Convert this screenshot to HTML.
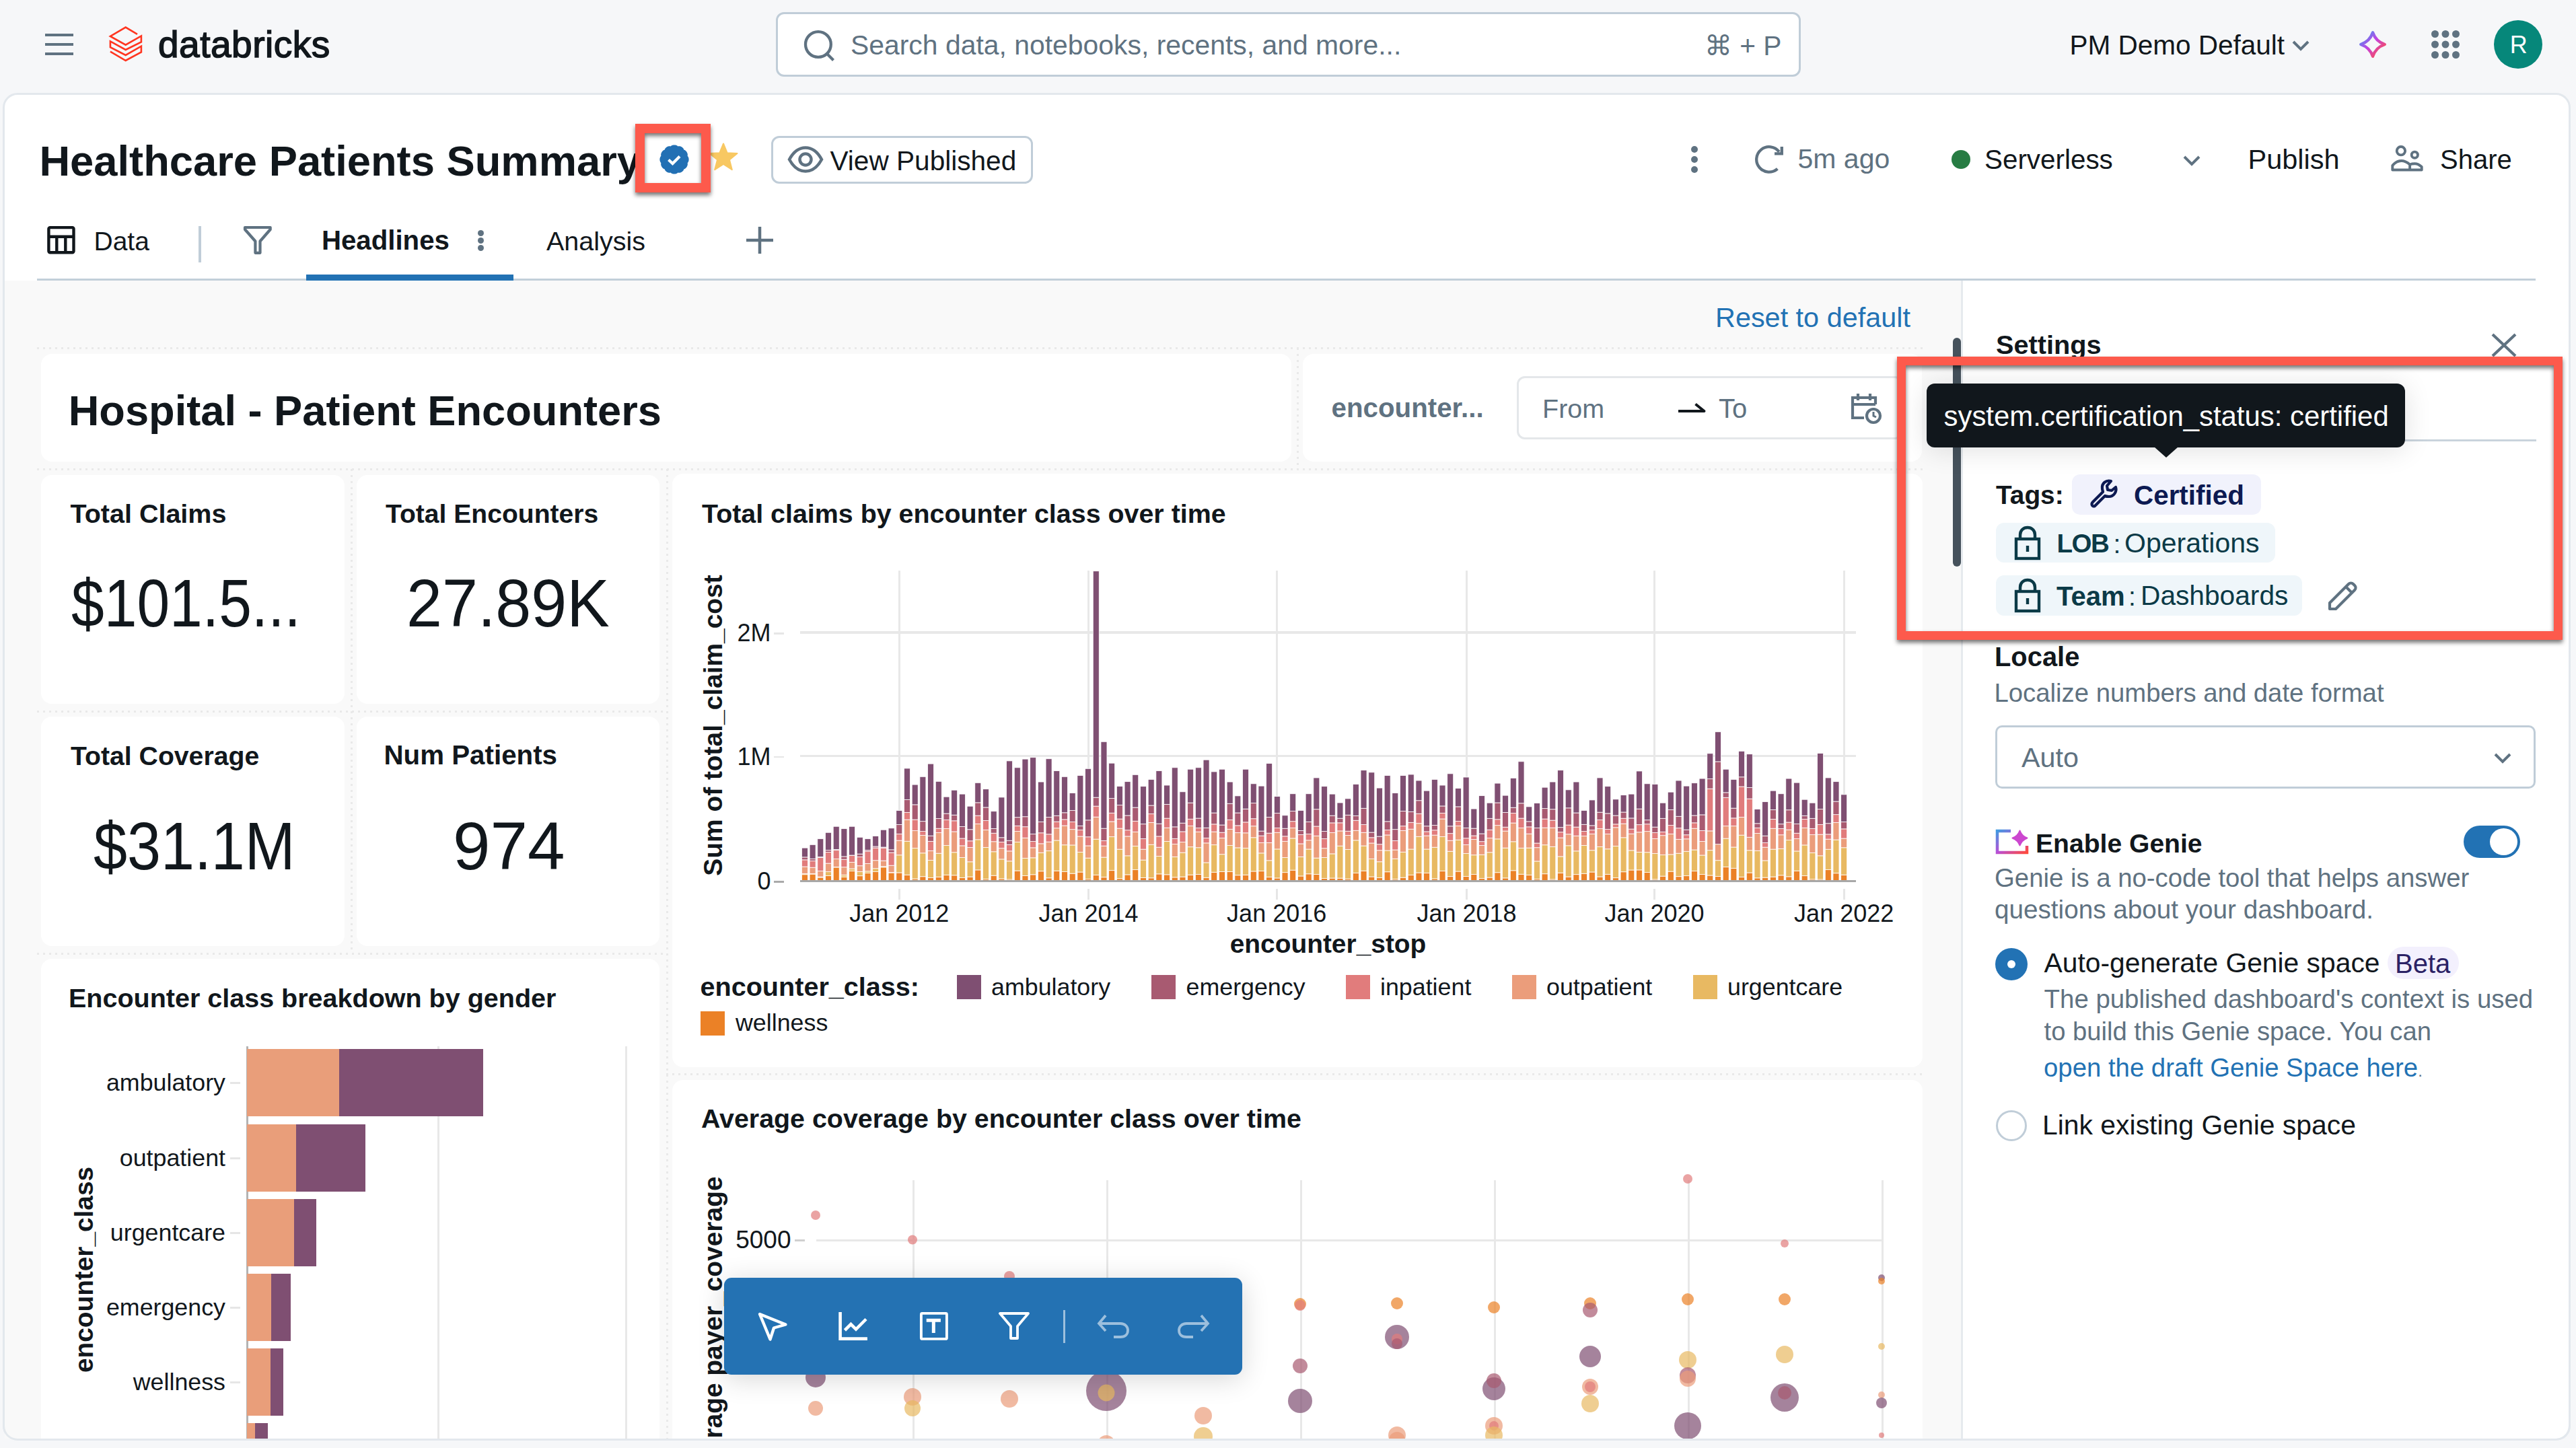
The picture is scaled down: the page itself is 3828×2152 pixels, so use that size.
<!DOCTYPE html><html><head><meta charset="utf-8"><style>
html,body{margin:0;padding:0;width:3828px;height:2152px;overflow:hidden;background:#f6f7f9;font-family:"Liberation Sans",sans-serif;}
.a{position:absolute;}
.t{position:absolute;white-space:nowrap;line-height:1;}
svg.a{overflow:visible;}
</style></head><body>
<div id="root" style="position:absolute;left:0;top:0;width:3828px;height:2152px;overflow:hidden"><div class="a" style="left:67px;top:50px;width:42px;height:4px;background:#5f7281"></div>
<div class="a" style="left:67px;top:64px;width:42px;height:4px;background:#5f7281"></div>
<div class="a" style="left:67px;top:78px;width:42px;height:4px;background:#5f7281"></div>
<svg class="a" style="left:155px;top:30px;" width="70" height="70" viewBox="0 0 70 70"><path d="M49 20.8 L31.7 10.6 L8.9 23.9 L31.7 36.7 L54.9 23.4 L54.9 32.4 L31.7 44 L8.9 31.4 L8.9 40.1 L31.7 52 L54.9 38.7 L54.9 47.4 L31.7 60 L8.9 46.6" fill="none" stroke="#ff3621" stroke-width="2.6" stroke-linejoin="miter"/></svg>
<div class="t " style="left:235.0px;top:39.4px;font-size:55px;color:#11171c;-webkit-text-stroke:1.5px #11171c;letter-spacing:0.5px">databricks</div>
<div class="a" style="left:1153px;top:18px;width:1523px;height:96px;border:3px solid #c0cdd8;border-radius:12px;background:#fff;box-sizing:border-box"></div>
<svg class="a" style="left:1192px;top:43px;" width="50" height="50" viewBox="0 0 50 50"><circle cx="23.9" cy="23" r="18.9" fill="none" stroke="#5f7281" stroke-width="4.3"/><path d="M36.5 36.5 L46.5 46.5" stroke="#5f7281" stroke-width="4.3"/></svg>
<div class="t " style="left:1264.0px;top:47.4px;font-size:40.9px;color:#5f7281;">Search data, notebooks, recents, and more...</div>
<div class="t " style="left:2533.0px;top:47.5px;font-size:40.7px;color:#5f7281;">&#8984; + P</div>
<div class="t " style="left:3075.5px;top:46.7px;font-size:40.5px;color:#11171c;">PM Demo Default</div>
<svg class="a" style="left:3404px;top:56px;" width="30" height="24" viewBox="0 0 30 24"><path d="M4 6 L15 17 L26 6" fill="none" stroke="#5f7281" stroke-width="4"/></svg>
<svg class="a" style="left:3503px;top:43px;" width="46" height="46" viewBox="0 0 46 46"><defs><linearGradient id="sg" x1="0.1" y1="0.1" x2="0.9" y2="0.9"><stop offset="0" stop-color="#4d8ff2"/><stop offset="0.45" stop-color="#c242e2"/><stop offset="1" stop-color="#ff4d4d"/></linearGradient></defs><path d="M23 5.2 Q27.5 18.5 40.8 23 Q27.5 27.5 23 40.8 Q18.5 27.5 5.2 23 Q18.5 18.5 23 5.2 Z" fill="none" stroke="url(#sg)" stroke-width="4.3" stroke-linejoin="round"/></svg>
<svg class="a" style="left:3613px;top:44.6px;" width="43" height="43" viewBox="0 0 43 43"><circle cx="5.5" cy="5.5" r="5.5" fill="#5f7281"/><circle cx="5.5" cy="21.0" r="5.5" fill="#5f7281"/><circle cx="5.5" cy="36.5" r="5.5" fill="#5f7281"/><circle cx="21.0" cy="5.5" r="5.5" fill="#5f7281"/><circle cx="21.0" cy="21.0" r="5.5" fill="#5f7281"/><circle cx="21.0" cy="36.5" r="5.5" fill="#5f7281"/><circle cx="36.5" cy="5.5" r="5.5" fill="#5f7281"/><circle cx="36.5" cy="21.0" r="5.5" fill="#5f7281"/><circle cx="36.5" cy="36.5" r="5.5" fill="#5f7281"/></svg>
<div class="a" style="left:3706px;top:30px;width:72px;height:72px;background:#06877a;border-radius:50%"></div>
<div class="t" style="left:2742.7px;width:2000px;text-align:center;top:49.0px;font-size:36px;color:#fff;">R</div>
<div class="a" style="left:4px;top:138px;width:3816px;height:2003px;background:#fff;border:3px solid #e3e8ed;border-radius:22px;box-sizing:border-box"></div>
<div class="a" style="left:7px;top:417px;width:2908px;height:1721px;background:#f9f9f9"></div>
<div class="a" style="left:2914px;top:417px;width:3px;height:1721px;background:#e6eaee"></div>
<div class="t " style="left:58.4px;top:208.2px;font-size:63.3px;color:#11171c;font-weight:700;">Healthcare Patients Summary</div>
<svg class="a" style="left:980px;top:215px;" width="44" height="44" viewBox="0 0 44 44"><polygon points="43.60,22.00 43.58,22.57 43.53,23.13 43.44,23.69 43.32,24.24 43.15,24.79 42.96,25.32 42.72,25.84 42.44,26.34 42.09,26.82 41.51,27.23 41.81,27.87 41.87,28.46 41.86,29.03 41.81,29.60 41.71,30.17 41.58,30.72 41.41,31.26 41.21,31.79 40.97,32.30 40.71,32.80 40.41,33.28 40.08,33.74 39.72,34.18 39.34,34.60 38.93,34.99 38.49,35.35 38.02,35.68 37.53,35.98 36.99,36.22 36.28,36.28 36.22,36.99 35.98,37.53 35.68,38.02 35.35,38.49 34.99,38.93 34.60,39.34 34.18,39.72 33.74,40.08 33.28,40.41 32.80,40.71 32.30,40.97 31.79,41.21 31.26,41.41 30.72,41.58 30.17,41.71 29.60,41.81 29.03,41.86 28.46,41.87 27.87,41.81 27.23,41.51 26.82,42.09 26.34,42.44 25.84,42.72 25.32,42.96 24.79,43.15 24.24,43.32 23.69,43.44 23.13,43.53 22.57,43.58 22.00,43.60 21.43,43.58 20.87,43.53 20.31,43.44 19.76,43.32 19.21,43.15 18.68,42.96 18.16,42.72 17.66,42.44 17.18,42.09 16.77,41.51 16.13,41.81 15.54,41.87 14.97,41.86 14.40,41.81 13.83,41.71 13.28,41.58 12.74,41.41 12.21,41.21 11.70,40.97 11.20,40.71 10.72,40.41 10.26,40.08 9.82,39.72 9.40,39.34 9.01,38.93 8.65,38.49 8.32,38.02 8.02,37.53 7.78,36.99 7.72,36.28 7.01,36.22 6.47,35.98 5.98,35.68 5.51,35.35 5.07,34.99 4.66,34.60 4.28,34.18 3.92,33.74 3.59,33.28 3.29,32.80 3.03,32.30 2.79,31.79 2.59,31.26 2.42,30.72 2.29,30.17 2.19,29.60 2.14,29.03 2.13,28.46 2.19,27.87 2.49,27.23 1.91,26.82 1.56,26.34 1.28,25.84 1.04,25.32 0.85,24.79 0.68,24.24 0.56,23.69 0.47,23.13 0.42,22.57 0.40,22.00 0.42,21.43 0.47,20.87 0.56,20.31 0.68,19.76 0.85,19.21 1.04,18.68 1.28,18.16 1.56,17.66 1.91,17.18 2.49,16.77 2.19,16.13 2.13,15.54 2.14,14.97 2.19,14.40 2.29,13.83 2.42,13.28 2.59,12.74 2.79,12.21 3.03,11.70 3.29,11.20 3.59,10.72 3.92,10.26 4.28,9.82 4.66,9.40 5.07,9.01 5.51,8.65 5.98,8.32 6.47,8.02 7.01,7.78 7.72,7.72 7.78,7.01 8.02,6.47 8.32,5.98 8.65,5.51 9.01,5.07 9.40,4.66 9.82,4.28 10.26,3.92 10.72,3.59 11.20,3.29 11.70,3.03 12.21,2.79 12.74,2.59 13.28,2.42 13.83,2.29 14.40,2.19 14.97,2.14 15.54,2.13 16.13,2.19 16.77,2.49 17.18,1.91 17.66,1.56 18.16,1.28 18.68,1.04 19.21,0.85 19.76,0.68 20.31,0.56 20.87,0.47 21.43,0.42 22.00,0.40 22.57,0.42 23.13,0.47 23.69,0.56 24.24,0.68 24.79,0.85 25.32,1.04 25.84,1.28 26.34,1.56 26.82,1.91 27.23,2.49 27.87,2.19 28.46,2.13 29.03,2.14 29.60,2.19 30.17,2.29 30.72,2.42 31.26,2.59 31.79,2.79 32.30,3.03 32.80,3.29 33.28,3.59 33.74,3.92 34.18,4.28 34.60,4.66 34.99,5.07 35.35,5.51 35.68,5.98 35.98,6.47 36.22,7.01 36.28,7.72 36.99,7.78 37.53,8.02 38.02,8.32 38.49,8.65 38.93,9.01 39.34,9.40 39.72,9.82 40.08,10.26 40.41,10.72 40.71,11.20 40.97,11.70 41.21,12.21 41.41,12.74 41.58,13.28 41.71,13.83 41.81,14.40 41.86,14.97 41.87,15.54 41.81,16.13 41.51,16.77 42.09,17.18 42.44,17.66 42.72,18.16 42.96,18.68 43.15,19.21 43.32,19.76 43.44,20.31 43.53,20.87 43.58,21.43" fill="#2270b4"/><path d="M13.5 22.5 L19.5 28 L30 17.5" fill="none" stroke="#fff" stroke-width="4.2"/></svg>
<svg class="a" style="left:1052px;top:211px;" width="46" height="46" viewBox="0 0 46 46"><path d="M23 2.5 L28.6 16.2 L43.5 17 L32 26.6 L35.8 41.2 L23 33 L10.2 41.2 L14 26.6 L2.5 17 L17.4 16.2 Z" fill="#f8c862" stroke="#f8c862" stroke-width="2" stroke-linejoin="round"/></svg>
<div class="a" style="left:944px;top:184px;width:112px;height:102px;border:14px solid #fd5a4c;box-sizing:border-box;filter:drop-shadow(0 4px 3px rgba(0,0,0,.55))"></div>
<div class="a" style="left:1146px;top:202px;width:389px;height:71px;border:3px solid #c0cdd8;border-radius:12px;box-sizing:border-box"></div>
<svg class="a" style="left:1170px;top:216px;" width="54" height="42" viewBox="0 0 54 42"><path d="M3 21 C10 8 18 3.5 27 3.5 C36 3.5 44 8 51 21 C44 34 36 38.5 27 38.5 C18 38.5 10 34 3 21 Z" fill="none" stroke="#5f7281" stroke-width="4.5"/><circle cx="27" cy="21" r="8.5" fill="none" stroke="#5f7281" stroke-width="4.5"/></svg>
<div class="t " style="left:1233.5px;top:218.6px;font-size:40.6px;color:#11171c;">View Published</div>
<div class="a" style="left:2513px;top:217px;width:10px;height:10px;background:#5f7281;border-radius:50%"></div>
<div class="a" style="left:2513px;top:232px;width:10px;height:10px;background:#5f7281;border-radius:50%"></div>
<div class="a" style="left:2513px;top:247px;width:10px;height:10px;background:#5f7281;border-radius:50%"></div>
<svg class="a" style="left:2604px;top:212px;" width="50" height="50" viewBox="0 0 50 50"><path d="M39.83 13.65 A18.7 18.7 0 1 0 37.41 38.8" fill="none" stroke="#5f7281" stroke-width="4.3"/><path d="M33 16.3 H43.8 V5.9" fill="none" stroke="#5f7281" stroke-width="4.3" stroke-linejoin="miter"/></svg>
<div class="t " style="left:2671.5px;top:216.3px;font-size:41px;color:#5f7281;">5m ago</div>
<div class="a" style="left:2900px;top:223px;width:28px;height:28px;background:#277c43;border-radius:50%"></div>
<div class="t " style="left:2949.0px;top:216.8px;font-size:40.4px;color:#11171c;">Serverless</div>
<svg class="a" style="left:3242px;top:228px;" width="30" height="22" viewBox="0 0 30 22"><path d="M4 5 L15 16 L26 5" fill="none" stroke="#5f7281" stroke-width="4"/></svg>
<div class="t " style="left:3340.5px;top:215.9px;font-size:41.5px;color:#11171c;">Publish</div>
<svg class="a" style="left:3550px;top:212px;" width="54" height="46" viewBox="0 0 54 46"><circle cx="17.9" cy="12.2" r="6.2" fill="none" stroke="#5f7281" stroke-width="3.9"/><circle cx="38.3" cy="18.2" r="4.6" fill="none" stroke="#5f7281" stroke-width="3.9"/><path d="M5.3 40.5 V34 C9 29.5 13 27 18.6 27 C24 27 27.5 29.5 31.1 32.5 C33.5 31.5 35.5 31.2 38.5 31.2 C42.5 31.2 45.5 33 48.7 36 V40.5 Z M31.1 32.5 V40.5" fill="none" stroke="#5f7281" stroke-width="3.9" stroke-linejoin="round"/></svg>
<div class="t " style="left:3626.0px;top:217.1px;font-size:40px;color:#11171c;">Share</div>
<svg class="a" style="left:68px;top:334px;" width="46" height="46" viewBox="0 0 46 46"><rect x="4.4" y="4.1" width="37.1" height="37.2" rx="2" fill="none" stroke="#11171c" stroke-width="4.4"/><path d="M4.4 17.7 H41.5 M16.3 17.7 V41.3 M29.3 17.7 V41.3" stroke="#11171c" stroke-width="4.4"/></svg>
<div class="t " style="left:139.5px;top:339.0px;font-size:39px;color:#11171c;">Data</div>
<div class="a" style="left:295px;top:336px;width:4px;height:54px;background:#c0cdd8"></div>
<svg class="a" style="left:358px;top:334px;" width="50" height="48" viewBox="0 0 50 48"><path d="M6 4 H43.7 V7 L28.5 24.5 V41.8 H21.4 V24.5 L6 7 Z" fill="none" stroke="#5f7281" stroke-width="4.2" stroke-linejoin="round"/></svg>
<div class="t " style="left:478.0px;top:338.0px;font-size:40.2px;color:#11171c;font-weight:700;">Headlines</div>
<div class="a" style="left:710px;top:341.5px;width:9px;height:9.0px;background:#5f7281;border-radius:50%"></div>
<div class="a" style="left:710px;top:352.5px;width:9px;height:9.0px;background:#5f7281;border-radius:50%"></div>
<div class="a" style="left:710px;top:363.5px;width:9px;height:9.0px;background:#5f7281;border-radius:50%"></div>
<div class="t " style="left:812.0px;top:338.6px;font-size:39.5px;color:#11171c;">Analysis</div>
<svg class="a" style="left:1106px;top:334px;" width="46" height="46" viewBox="0 0 46 46"><path d="M23 3 V43 M3 23 H43" stroke="#5f7281" stroke-width="4.5"/></svg>
<div class="a" style="left:55px;top:414px;width:3713px;height:3px;background:#c2cfd9"></div>
<div class="a" style="left:455px;top:408px;width:308px;height:9px;background:#2272b4"></div>
<div class="t " style="left:2549.0px;top:451.5px;font-size:41.4px;color:#2272b4;">Reset to default</div>
<div class="a" style="left:55px;top:515.5px;width:2805px;height:3.0px;background:repeating-linear-gradient(90deg,#e9e9e9 0 3px,transparent 3px 9px)"></div>
<div class="a" style="left:55px;top:695.5px;width:2805px;height:3.0px;background:repeating-linear-gradient(90deg,#e9e9e9 0 3px,transparent 3px 9px)"></div>
<div class="a" style="left:55px;top:1055.5px;width:936px;height:3.0px;background:repeating-linear-gradient(90deg,#e9e9e9 0 3px,transparent 3px 9px)"></div>
<div class="a" style="left:55px;top:1415.5px;width:936px;height:3.0px;background:repeating-linear-gradient(90deg,#e9e9e9 0 3px,transparent 3px 9px)"></div>
<div class="a" style="left:990px;top:1594.5px;width:1870px;height:3.0px;background:repeating-linear-gradient(90deg,#e9e9e9 0 3px,transparent 3px 9px)"></div>
<div class="a" style="left:521.0px;top:697px;width:3.0px;height:720px;background:repeating-linear-gradient(180deg,#e9e9e9 0 3px,transparent 3px 9px)"></div>
<div class="a" style="left:990.0px;top:697px;width:3.0px;height:1441px;background:repeating-linear-gradient(180deg,#e9e9e9 0 3px,transparent 3px 9px)"></div>
<div class="a" style="left:1926.5px;top:517px;width:3.0px;height:180px;background:repeating-linear-gradient(180deg,#e9e9e9 0 3px,transparent 3px 9px)"></div>
<div class="a" style="left:61px;top:526px;width:1858px;height:160px;background:#fff;border-radius:16px"></div>
<div class="t " style="left:101.7px;top:578.5px;font-size:63.2px;color:#11171c;font-weight:700;">Hospital - Patient Encounters</div>
<div class="a" style="left:1936px;top:526px;width:920px;height:160px;background:#fff;border-radius:16px"></div>
<div class="t " style="left:1978.5px;top:587.2px;font-size:40.3px;color:#5f7281;font-weight:700;">encounter...</div>
<div class="a" style="left:2254px;top:559px;width:574px;height:94px;border:3px solid #e4e7ea;border-radius:12px;box-sizing:border-box;background:#fff"></div>
<div class="t " style="left:2292.0px;top:587.9px;font-size:39.5px;color:#5f7281;">From</div>
<svg class="a" style="left:2492px;top:596px;" width="44" height="20" viewBox="0 0 44 20"><path d="M2 15 H40.5 L27.5 4.5" fill="none" stroke="#11171c" stroke-width="4" stroke-linejoin="round"/></svg>
<div class="t " style="left:2554.0px;top:587.4px;font-size:40px;color:#5f7281;">To</div>
<svg class="a" style="left:2749px;top:581px;" width="50" height="50" viewBox="0 0 50 50"><path d="M21 40 H4 V10 H38 V20 M4 20 H38 M12 4 V14 M30 4 V14" fill="none" stroke="#5f7281" stroke-width="4.2"/><circle cx="35" cy="37" r="10" fill="none" stroke="#5f7281" stroke-width="4.2"/><path d="M35 31 V37 L39 39" fill="none" stroke="#5f7281" stroke-width="3"/></svg>
<div class="a" style="left:61px;top:706px;width:451px;height:340px;background:#fff;border-radius:16px"></div>
<div class="a" style="left:530px;top:706px;width:450px;height:340px;background:#fff;border-radius:16px"></div>
<div class="a" style="left:61px;top:1065px;width:451px;height:341px;background:#fff;border-radius:16px"></div>
<div class="a" style="left:530px;top:1065px;width:450px;height:341px;background:#fff;border-radius:16px"></div>
<div class="t " style="left:104.5px;top:743.6px;font-size:39.5px;color:#11171c;font-weight:700;">Total Claims</div>
<div class="t " style="left:573.0px;top:743.9px;font-size:39.1px;color:#11171c;font-weight:700;">Total Encounters</div>
<div class="t " style="left:105.0px;top:1103.8px;font-size:39.2px;color:#11171c;font-weight:700;">Total Coverage</div>
<div class="t " style="left:570.5px;top:1102.9px;font-size:40.3px;color:#11171c;font-weight:700;">Num Patients</div>
<div class="t" style="left:106.4px;top:846.4px;font-size:100px;color:#11171c;transform:scaleX(0.8757);transform-origin:0 0">$101.5...</div>
<div class="t" style="left:604.3px;top:846.4px;font-size:100px;color:#11171c;transform:scaleX(0.9520);transform-origin:0 0">27.89K</div>
<div class="t" style="left:139.4px;top:1206.9px;font-size:100px;color:#11171c;transform:scaleX(0.8983);transform-origin:0 0">$31.1M</div>
<div class="t" style="left:672.6px;top:1206.9px;font-size:100px;color:#11171c;transform:scaleX(0.9980);transform-origin:0 0">974</div>
<div class="a" style="left:61px;top:1425px;width:919px;height:775px;background:#fff;border-radius:16px"></div>
<div class="t " style="left:102.0px;top:1463.6px;font-size:39.5px;color:#11171c;font-weight:700;">Encounter class breakdown by gender</div>
<div class="a" style="left:650px;top:1555px;width:3px;height:583px;background:#e8e8e8"></div>
<div class="a" style="left:929px;top:1555px;width:3px;height:583px;background:#e8e8e8"></div>
<div class="a" style="left:366px;top:1555px;width:3px;height:583px;background:#b3b3b3"></div>
<div class="a" style="left:367px;top:1559px;width:137px;height:100px;background:#e99e7a"></div>
<div class="a" style="left:504px;top:1559px;width:214px;height:100px;background:#7f4f72"></div>
<div class="t" style="right:3493.0px;top:1591.7px;font-size:35.8px;color:#11171c;">ambulatory</div>
<div class="a" style="left:342px;top:1608px;width:15px;height:3px;background:#e6e6e6"></div>
<div class="a" style="left:367px;top:1671px;width:73px;height:100px;background:#e99e7a"></div>
<div class="a" style="left:440px;top:1671px;width:103px;height:100px;background:#7f4f72"></div>
<div class="t" style="right:3493.0px;top:1703.7px;font-size:35.8px;color:#11171c;">outpatient</div>
<div class="a" style="left:342px;top:1720px;width:15px;height:3px;background:#e6e6e6"></div>
<div class="a" style="left:367px;top:1782px;width:70px;height:100px;background:#e99e7a"></div>
<div class="a" style="left:437px;top:1782px;width:33px;height:100px;background:#7f4f72"></div>
<div class="t" style="right:3493.0px;top:1814.7px;font-size:35.8px;color:#11171c;">urgentcare</div>
<div class="a" style="left:342px;top:1831px;width:15px;height:3px;background:#e6e6e6"></div>
<div class="a" style="left:367px;top:1893px;width:36px;height:100px;background:#e99e7a"></div>
<div class="a" style="left:403px;top:1893px;width:29px;height:100px;background:#7f4f72"></div>
<div class="t" style="right:3493.0px;top:1925.7px;font-size:35.8px;color:#11171c;">emergency</div>
<div class="a" style="left:342px;top:1942px;width:15px;height:3px;background:#e6e6e6"></div>
<div class="a" style="left:367px;top:2004px;width:35px;height:100px;background:#e99e7a"></div>
<div class="a" style="left:402px;top:2004px;width:19px;height:100px;background:#7f4f72"></div>
<div class="t" style="right:3493.0px;top:2036.7px;font-size:35.8px;color:#11171c;">wellness</div>
<div class="a" style="left:342px;top:2053px;width:15px;height:3px;background:#e6e6e6"></div>
<div class="a" style="left:367px;top:2115px;width:12px;height:100px;background:#e99e7a"></div>
<div class="a" style="left:379px;top:2115px;width:19px;height:100px;background:#7f4f72"></div>
<div class="t" style="left:-75px;top:1867px;width:400px;height:40px;text-align:center;font-size:38.8px;font-weight:700;color:#11171c;transform:rotate(-90deg);line-height:40px">encounter_class</div>
<div class="a" style="left:999px;top:704px;width:1858px;height:882px;background:#fff;border-radius:16px"></div>
<div class="t " style="left:1043.0px;top:743.6px;font-size:39.4px;color:#11171c;font-weight:700;">Total claims by encounter class over time</div>
<div class="a" style="left:1335px;top:848px;width:3px;height:461px;background:#e8e8e8"></div>
<div class="a" style="left:1335px;top:1321px;width:3px;height:16px;background:#e6e6e6"></div>
<div class="a" style="left:1616px;top:848px;width:3px;height:461px;background:#e8e8e8"></div>
<div class="a" style="left:1616px;top:1321px;width:3px;height:16px;background:#e6e6e6"></div>
<div class="a" style="left:1896px;top:848px;width:3px;height:461px;background:#e8e8e8"></div>
<div class="a" style="left:1896px;top:1321px;width:3px;height:16px;background:#e6e6e6"></div>
<div class="a" style="left:2178px;top:848px;width:3px;height:461px;background:#e8e8e8"></div>
<div class="a" style="left:2178px;top:1321px;width:3px;height:16px;background:#e6e6e6"></div>
<div class="a" style="left:2457px;top:848px;width:3px;height:461px;background:#e8e8e8"></div>
<div class="a" style="left:2457px;top:1321px;width:3px;height:16px;background:#e6e6e6"></div>
<div class="a" style="left:2739px;top:848px;width:3px;height:461px;background:#e8e8e8"></div>
<div class="a" style="left:2739px;top:1321px;width:3px;height:16px;background:#e6e6e6"></div>
<div class="a" style="left:1189px;top:938px;width:1569px;height:4px;background:#e8e8e8"></div>
<div class="a" style="left:1189px;top:1122px;width:1569px;height:3px;background:#e8e8e8"></div>
<div class="a" style="left:1150px;top:940px;width:15px;height:3px;background:#e6e6e6"></div>
<div class="t" style="right:2682.5px;top:923.0px;font-size:36px;color:#11171c;">2M</div>
<div class="a" style="left:1150px;top:1124px;width:15px;height:2px;background:#e6e6e6"></div>
<div class="t" style="right:2682.5px;top:1106.5px;font-size:36px;color:#11171c;">1M</div>
<div class="a" style="left:1150px;top:1309px;width:15px;height:3px;background:#aaaaaa"></div>
<div class="t" style="right:2682.5px;top:1291.8px;font-size:36px;color:#11171c;">0</div>
<div class="t" style="left:336.3px;width:2000px;text-align:center;top:1340.0px;font-size:36px;color:#11171c;">Jan 2012</div>
<div class="t" style="left:617.5px;width:2000px;text-align:center;top:1340.0px;font-size:36px;color:#11171c;">Jan 2014</div>
<div class="t" style="left:897.2px;width:2000px;text-align:center;top:1340.0px;font-size:36px;color:#11171c;">Jan 2016</div>
<div class="t" style="left:1179.5px;width:2000px;text-align:center;top:1340.0px;font-size:36px;color:#11171c;">Jan 2018</div>
<div class="t" style="left:1458.5px;width:2000px;text-align:center;top:1340.0px;font-size:36px;color:#11171c;">Jan 2020</div>
<div class="t" style="left:1740.2px;width:2000px;text-align:center;top:1340.0px;font-size:36px;color:#11171c;">Jan 2022</div>
<div class="t" style="left:973.5px;width:2000px;text-align:center;top:1384.1px;font-size:38.9px;color:#11171c;font-weight:700;">encounter_stop</div>
<div class="t" style="left:760px;top:1057.5px;width:600px;height:40px;text-align:center;font-size:38.9px;font-weight:700;color:#11171c;transform:rotate(-90deg);line-height:40px">Sum of total_claim_cost</div>
<svg class="a" style="left:0;top:0" width="3828" height="2152"><rect x="1191.40" y="1299.74" width="9" height="9.06" fill="#eb8126" stroke="#fff" stroke-width="0.8"/><rect x="1191.40" y="1298.35" width="9" height="1.39" fill="#e8b962" stroke="#fff" stroke-width="0.8"/><rect x="1191.40" y="1288.01" width="9" height="10.33" fill="#eb9d7b" stroke="#fff" stroke-width="0.8"/><rect x="1191.40" y="1277.86" width="9" height="10.16" fill="#e17c7c" stroke="#fff" stroke-width="0.8"/><rect x="1191.40" y="1273.91" width="9" height="3.95" fill="#a85a71" stroke="#fff" stroke-width="0.8"/><rect x="1191.40" y="1260.12" width="9" height="13.79" fill="#7f4f72" stroke="#fff" stroke-width="0.8"/><rect x="1203.10" y="1299.04" width="9" height="9.76" fill="#eb8126" stroke="#fff" stroke-width="0.8"/><rect x="1203.10" y="1298.51" width="9" height="0.53" fill="#e8b962" stroke="#fff" stroke-width="0.8"/><rect x="1203.10" y="1289.23" width="9" height="9.27" fill="#eb9d7b" stroke="#fff" stroke-width="0.8"/><rect x="1203.10" y="1279.53" width="9" height="9.70" fill="#e17c7c" stroke="#fff" stroke-width="0.8"/><rect x="1203.10" y="1276.33" width="9" height="3.20" fill="#a85a71" stroke="#fff" stroke-width="0.8"/><rect x="1203.10" y="1255.32" width="9" height="21.01" fill="#7f4f72" stroke="#fff" stroke-width="0.8"/><rect x="1214.80" y="1303.95" width="9" height="4.85" fill="#eb8126" stroke="#fff" stroke-width="0.8"/><rect x="1214.80" y="1303.12" width="9" height="0.84" fill="#e8b962" stroke="#fff" stroke-width="0.8"/><rect x="1214.80" y="1294.45" width="9" height="8.66" fill="#eb9d7b" stroke="#fff" stroke-width="0.8"/><rect x="1214.80" y="1274.56" width="9" height="19.89" fill="#e17c7c" stroke="#fff" stroke-width="0.8"/><rect x="1214.80" y="1273.65" width="9" height="0.91" fill="#a85a71" stroke="#fff" stroke-width="0.8"/><rect x="1214.80" y="1246.66" width="9" height="26.99" fill="#7f4f72" stroke="#fff" stroke-width="0.8"/><rect x="1226.50" y="1301.41" width="9" height="7.39" fill="#eb8126" stroke="#fff" stroke-width="0.8"/><rect x="1226.50" y="1295.62" width="9" height="5.78" fill="#e8b962" stroke="#fff" stroke-width="0.8"/><rect x="1226.50" y="1283.10" width="9" height="12.52" fill="#eb9d7b" stroke="#fff" stroke-width="0.8"/><rect x="1226.50" y="1266.43" width="9" height="16.67" fill="#e17c7c" stroke="#fff" stroke-width="0.8"/><rect x="1226.50" y="1263.50" width="9" height="2.93" fill="#a85a71" stroke="#fff" stroke-width="0.8"/><rect x="1226.50" y="1237.25" width="9" height="26.25" fill="#7f4f72" stroke="#fff" stroke-width="0.8"/><rect x="1238.20" y="1288.91" width="9" height="19.89" fill="#eb8126" stroke="#fff" stroke-width="0.8"/><rect x="1238.20" y="1288.48" width="9" height="0.43" fill="#e8b962" stroke="#fff" stroke-width="0.8"/><rect x="1238.20" y="1276.62" width="9" height="11.86" fill="#eb9d7b" stroke="#fff" stroke-width="0.8"/><rect x="1238.20" y="1263.66" width="9" height="12.96" fill="#e17c7c" stroke="#fff" stroke-width="0.8"/><rect x="1238.20" y="1262.59" width="9" height="1.06" fill="#a85a71" stroke="#fff" stroke-width="0.8"/><rect x="1238.20" y="1228.22" width="9" height="34.38" fill="#7f4f72" stroke="#fff" stroke-width="0.8"/><rect x="1249.89" y="1303.16" width="9" height="5.64" fill="#eb8126" stroke="#fff" stroke-width="0.8"/><rect x="1249.89" y="1300.31" width="9" height="2.84" fill="#e8b962" stroke="#fff" stroke-width="0.8"/><rect x="1249.89" y="1288.76" width="9" height="11.55" fill="#eb9d7b" stroke="#fff" stroke-width="0.8"/><rect x="1249.89" y="1277.21" width="9" height="11.55" fill="#e17c7c" stroke="#fff" stroke-width="0.8"/><rect x="1249.89" y="1272.92" width="9" height="4.29" fill="#a85a71" stroke="#fff" stroke-width="0.8"/><rect x="1249.89" y="1231.54" width="9" height="41.38" fill="#7f4f72" stroke="#fff" stroke-width="0.8"/><rect x="1261.59" y="1294.51" width="9" height="14.29" fill="#eb8126" stroke="#fff" stroke-width="0.8"/><rect x="1261.59" y="1291.08" width="9" height="3.43" fill="#e8b962" stroke="#fff" stroke-width="0.8"/><rect x="1261.59" y="1281.50" width="9" height="9.57" fill="#eb9d7b" stroke="#fff" stroke-width="0.8"/><rect x="1261.59" y="1271.47" width="9" height="10.03" fill="#e17c7c" stroke="#fff" stroke-width="0.8"/><rect x="1261.59" y="1271.03" width="9" height="0.44" fill="#a85a71" stroke="#fff" stroke-width="0.8"/><rect x="1261.59" y="1228.22" width="9" height="42.82" fill="#7f4f72" stroke="#fff" stroke-width="0.8"/><rect x="1273.29" y="1301.69" width="9" height="7.11" fill="#eb8126" stroke="#fff" stroke-width="0.8"/><rect x="1273.29" y="1295.42" width="9" height="6.27" fill="#e8b962" stroke="#fff" stroke-width="0.8"/><rect x="1273.29" y="1286.73" width="9" height="8.69" fill="#eb9d7b" stroke="#fff" stroke-width="0.8"/><rect x="1273.29" y="1273.46" width="9" height="13.28" fill="#e17c7c" stroke="#fff" stroke-width="0.8"/><rect x="1273.29" y="1269.14" width="9" height="4.32" fill="#a85a71" stroke="#fff" stroke-width="0.8"/><rect x="1273.29" y="1244.26" width="9" height="24.88" fill="#7f4f72" stroke="#fff" stroke-width="0.8"/><rect x="1284.99" y="1297.59" width="9" height="11.21" fill="#eb8126" stroke="#fff" stroke-width="0.8"/><rect x="1284.99" y="1294.83" width="9" height="2.76" fill="#e8b962" stroke="#fff" stroke-width="0.8"/><rect x="1284.99" y="1283.44" width="9" height="11.39" fill="#eb9d7b" stroke="#fff" stroke-width="0.8"/><rect x="1284.99" y="1265.19" width="9" height="18.24" fill="#e17c7c" stroke="#fff" stroke-width="0.8"/><rect x="1284.99" y="1263.39" width="9" height="1.80" fill="#a85a71" stroke="#fff" stroke-width="0.8"/><rect x="1284.99" y="1246.66" width="9" height="16.74" fill="#7f4f72" stroke="#fff" stroke-width="0.8"/><rect x="1296.69" y="1295.58" width="9" height="13.22" fill="#eb8126" stroke="#fff" stroke-width="0.8"/><rect x="1296.69" y="1290.74" width="9" height="4.84" fill="#e8b962" stroke="#fff" stroke-width="0.8"/><rect x="1296.69" y="1278.75" width="9" height="11.99" fill="#eb9d7b" stroke="#fff" stroke-width="0.8"/><rect x="1296.69" y="1260.11" width="9" height="18.64" fill="#e17c7c" stroke="#fff" stroke-width="0.8"/><rect x="1296.69" y="1257.99" width="9" height="2.12" fill="#a85a71" stroke="#fff" stroke-width="0.8"/><rect x="1296.69" y="1242.42" width="9" height="15.57" fill="#7f4f72" stroke="#fff" stroke-width="0.8"/><rect x="1308.39" y="1288.85" width="9" height="19.95" fill="#eb8126" stroke="#fff" stroke-width="0.8"/><rect x="1308.39" y="1287.76" width="9" height="1.09" fill="#e8b962" stroke="#fff" stroke-width="0.8"/><rect x="1308.39" y="1279.14" width="9" height="8.62" fill="#eb9d7b" stroke="#fff" stroke-width="0.8"/><rect x="1308.39" y="1260.15" width="9" height="18.99" fill="#e17c7c" stroke="#fff" stroke-width="0.8"/><rect x="1308.39" y="1259.03" width="9" height="1.12" fill="#a85a71" stroke="#fff" stroke-width="0.8"/><rect x="1308.39" y="1233.20" width="9" height="25.83" fill="#7f4f72" stroke="#fff" stroke-width="0.8"/><rect x="1320.09" y="1297.00" width="9" height="11.80" fill="#eb8126" stroke="#fff" stroke-width="0.8"/><rect x="1320.09" y="1296.64" width="9" height="0.36" fill="#e8b962" stroke="#fff" stroke-width="0.8"/><rect x="1320.09" y="1286.17" width="9" height="10.46" fill="#eb9d7b" stroke="#fff" stroke-width="0.8"/><rect x="1320.09" y="1267.09" width="9" height="19.09" fill="#e17c7c" stroke="#fff" stroke-width="0.8"/><rect x="1320.09" y="1262.86" width="9" height="4.23" fill="#a85a71" stroke="#fff" stroke-width="0.8"/><rect x="1320.09" y="1230.80" width="9" height="32.06" fill="#7f4f72" stroke="#fff" stroke-width="0.8"/><rect x="1331.79" y="1296.94" width="9" height="11.86" fill="#eb8126" stroke="#fff" stroke-width="0.8"/><rect x="1331.79" y="1270.79" width="9" height="26.15" fill="#e8b962" stroke="#fff" stroke-width="0.8"/><rect x="1331.79" y="1249.08" width="9" height="21.71" fill="#eb9d7b" stroke="#fff" stroke-width="0.8"/><rect x="1331.79" y="1239.35" width="9" height="9.73" fill="#e17c7c" stroke="#fff" stroke-width="0.8"/><rect x="1331.79" y="1225.45" width="9" height="13.90" fill="#a85a71" stroke="#fff" stroke-width="0.8"/><rect x="1331.79" y="1204.61" width="9" height="20.84" fill="#7f4f72" stroke="#fff" stroke-width="0.8"/><rect x="1343.49" y="1300.23" width="9" height="8.57" fill="#eb8126" stroke="#fff" stroke-width="0.8"/><rect x="1343.49" y="1250.22" width="9" height="50.01" fill="#e8b962" stroke="#fff" stroke-width="0.8"/><rect x="1343.49" y="1218.15" width="9" height="32.07" fill="#eb9d7b" stroke="#fff" stroke-width="0.8"/><rect x="1343.49" y="1207.37" width="9" height="10.78" fill="#e17c7c" stroke="#fff" stroke-width="0.8"/><rect x="1343.49" y="1188.37" width="9" height="19.00" fill="#a85a71" stroke="#fff" stroke-width="0.8"/><rect x="1343.49" y="1141.92" width="9" height="46.45" fill="#7f4f72" stroke="#fff" stroke-width="0.8"/><rect x="1355.19" y="1306.06" width="9" height="2.74" fill="#eb8126" stroke="#fff" stroke-width="0.8"/><rect x="1355.19" y="1260.65" width="9" height="45.41" fill="#e8b962" stroke="#fff" stroke-width="0.8"/><rect x="1355.19" y="1234.61" width="9" height="26.03" fill="#eb9d7b" stroke="#fff" stroke-width="0.8"/><rect x="1355.19" y="1218.10" width="9" height="16.52" fill="#e17c7c" stroke="#fff" stroke-width="0.8"/><rect x="1355.19" y="1195.89" width="9" height="22.20" fill="#a85a71" stroke="#fff" stroke-width="0.8"/><rect x="1355.19" y="1166.07" width="9" height="29.82" fill="#7f4f72" stroke="#fff" stroke-width="0.8"/><rect x="1366.88" y="1302.76" width="9" height="6.04" fill="#eb8126" stroke="#fff" stroke-width="0.8"/><rect x="1366.88" y="1267.82" width="9" height="34.93" fill="#e8b962" stroke="#fff" stroke-width="0.8"/><rect x="1366.88" y="1241.35" width="9" height="26.47" fill="#eb9d7b" stroke="#fff" stroke-width="0.8"/><rect x="1366.88" y="1235.57" width="9" height="5.78" fill="#e17c7c" stroke="#fff" stroke-width="0.8"/><rect x="1366.88" y="1220.67" width="9" height="14.90" fill="#a85a71" stroke="#fff" stroke-width="0.8"/><rect x="1366.88" y="1154.27" width="9" height="66.40" fill="#7f4f72" stroke="#fff" stroke-width="0.8"/><rect x="1378.58" y="1304.48" width="9" height="4.32" fill="#eb8126" stroke="#fff" stroke-width="0.8"/><rect x="1378.58" y="1278.46" width="9" height="26.01" fill="#e8b962" stroke="#fff" stroke-width="0.8"/><rect x="1378.58" y="1264.36" width="9" height="14.10" fill="#eb9d7b" stroke="#fff" stroke-width="0.8"/><rect x="1378.58" y="1250.33" width="9" height="14.03" fill="#e17c7c" stroke="#fff" stroke-width="0.8"/><rect x="1378.58" y="1242.17" width="9" height="8.16" fill="#a85a71" stroke="#fff" stroke-width="0.8"/><rect x="1378.58" y="1135.10" width="9" height="107.08" fill="#7f4f72" stroke="#fff" stroke-width="0.8"/><rect x="1390.28" y="1303.30" width="9" height="5.50" fill="#eb8126" stroke="#fff" stroke-width="0.8"/><rect x="1390.28" y="1268.20" width="9" height="35.10" fill="#e8b962" stroke="#fff" stroke-width="0.8"/><rect x="1390.28" y="1237.61" width="9" height="30.58" fill="#eb9d7b" stroke="#fff" stroke-width="0.8"/><rect x="1390.28" y="1231.19" width="9" height="6.42" fill="#e17c7c" stroke="#fff" stroke-width="0.8"/><rect x="1390.28" y="1216.55" width="9" height="14.64" fill="#a85a71" stroke="#fff" stroke-width="0.8"/><rect x="1390.28" y="1161.28" width="9" height="55.27" fill="#7f4f72" stroke="#fff" stroke-width="0.8"/><rect x="1401.98" y="1300.33" width="9" height="8.47" fill="#eb8126" stroke="#fff" stroke-width="0.8"/><rect x="1401.98" y="1256.55" width="9" height="43.78" fill="#e8b962" stroke="#fff" stroke-width="0.8"/><rect x="1401.98" y="1231.43" width="9" height="25.12" fill="#eb9d7b" stroke="#fff" stroke-width="0.8"/><rect x="1401.98" y="1218.59" width="9" height="12.84" fill="#e17c7c" stroke="#fff" stroke-width="0.8"/><rect x="1401.98" y="1209.08" width="9" height="9.51" fill="#a85a71" stroke="#fff" stroke-width="0.8"/><rect x="1401.98" y="1184.15" width="9" height="24.93" fill="#7f4f72" stroke="#fff" stroke-width="0.8"/><rect x="1413.68" y="1300.83" width="9" height="7.97" fill="#eb8126" stroke="#fff" stroke-width="0.8"/><rect x="1413.68" y="1266.79" width="9" height="34.04" fill="#e8b962" stroke="#fff" stroke-width="0.8"/><rect x="1413.68" y="1235.95" width="9" height="30.84" fill="#eb9d7b" stroke="#fff" stroke-width="0.8"/><rect x="1413.68" y="1219.82" width="9" height="16.13" fill="#e17c7c" stroke="#fff" stroke-width="0.8"/><rect x="1413.68" y="1211.23" width="9" height="8.59" fill="#a85a71" stroke="#fff" stroke-width="0.8"/><rect x="1413.68" y="1174.19" width="9" height="37.04" fill="#7f4f72" stroke="#fff" stroke-width="0.8"/><rect x="1425.38" y="1304.36" width="9" height="4.44" fill="#eb8126" stroke="#fff" stroke-width="0.8"/><rect x="1425.38" y="1274.53" width="9" height="29.83" fill="#e8b962" stroke="#fff" stroke-width="0.8"/><rect x="1425.38" y="1256.89" width="9" height="17.64" fill="#eb9d7b" stroke="#fff" stroke-width="0.8"/><rect x="1425.38" y="1245.99" width="9" height="10.90" fill="#e17c7c" stroke="#fff" stroke-width="0.8"/><rect x="1425.38" y="1228.51" width="9" height="17.48" fill="#a85a71" stroke="#fff" stroke-width="0.8"/><rect x="1425.38" y="1180.09" width="9" height="48.42" fill="#7f4f72" stroke="#fff" stroke-width="0.8"/><rect x="1437.08" y="1303.08" width="9" height="5.72" fill="#eb8126" stroke="#fff" stroke-width="0.8"/><rect x="1437.08" y="1280.82" width="9" height="22.26" fill="#e8b962" stroke="#fff" stroke-width="0.8"/><rect x="1437.08" y="1259.41" width="9" height="21.41" fill="#eb9d7b" stroke="#fff" stroke-width="0.8"/><rect x="1437.08" y="1249.79" width="9" height="9.62" fill="#e17c7c" stroke="#fff" stroke-width="0.8"/><rect x="1437.08" y="1232.77" width="9" height="17.02" fill="#a85a71" stroke="#fff" stroke-width="0.8"/><rect x="1437.08" y="1198.16" width="9" height="34.61" fill="#7f4f72" stroke="#fff" stroke-width="0.8"/><rect x="1448.78" y="1292.90" width="9" height="15.90" fill="#eb8126" stroke="#fff" stroke-width="0.8"/><rect x="1448.78" y="1247.85" width="9" height="45.05" fill="#e8b962" stroke="#fff" stroke-width="0.8"/><rect x="1448.78" y="1224.48" width="9" height="23.36" fill="#eb9d7b" stroke="#fff" stroke-width="0.8"/><rect x="1448.78" y="1212.12" width="9" height="12.37" fill="#e17c7c" stroke="#fff" stroke-width="0.8"/><rect x="1448.78" y="1192.87" width="9" height="19.25" fill="#a85a71" stroke="#fff" stroke-width="0.8"/><rect x="1448.78" y="1163.31" width="9" height="29.56" fill="#7f4f72" stroke="#fff" stroke-width="0.8"/><rect x="1460.48" y="1306.41" width="9" height="2.39" fill="#eb8126" stroke="#fff" stroke-width="0.8"/><rect x="1460.48" y="1259.36" width="9" height="47.05" fill="#e8b962" stroke="#fff" stroke-width="0.8"/><rect x="1460.48" y="1233.35" width="9" height="26.00" fill="#eb9d7b" stroke="#fff" stroke-width="0.8"/><rect x="1460.48" y="1219.59" width="9" height="13.77" fill="#e17c7c" stroke="#fff" stroke-width="0.8"/><rect x="1460.48" y="1199.93" width="9" height="19.66" fill="#a85a71" stroke="#fff" stroke-width="0.8"/><rect x="1460.48" y="1172.71" width="9" height="27.22" fill="#7f4f72" stroke="#fff" stroke-width="0.8"/><rect x="1472.18" y="1301.17" width="9" height="7.63" fill="#eb8126" stroke="#fff" stroke-width="0.8"/><rect x="1472.18" y="1265.80" width="9" height="35.37" fill="#e8b962" stroke="#fff" stroke-width="0.8"/><rect x="1472.18" y="1250.79" width="9" height="15.01" fill="#eb9d7b" stroke="#fff" stroke-width="0.8"/><rect x="1472.18" y="1238.24" width="9" height="12.55" fill="#e17c7c" stroke="#fff" stroke-width="0.8"/><rect x="1472.18" y="1231.44" width="9" height="6.79" fill="#a85a71" stroke="#fff" stroke-width="0.8"/><rect x="1472.18" y="1205.72" width="9" height="25.72" fill="#7f4f72" stroke="#fff" stroke-width="0.8"/><rect x="1483.88" y="1305.96" width="9" height="2.84" fill="#eb8126" stroke="#fff" stroke-width="0.8"/><rect x="1483.88" y="1276.91" width="9" height="29.06" fill="#e8b962" stroke="#fff" stroke-width="0.8"/><rect x="1483.88" y="1260.71" width="9" height="16.20" fill="#eb9d7b" stroke="#fff" stroke-width="0.8"/><rect x="1483.88" y="1251.41" width="9" height="9.29" fill="#e17c7c" stroke="#fff" stroke-width="0.8"/><rect x="1483.88" y="1244.81" width="9" height="6.60" fill="#a85a71" stroke="#fff" stroke-width="0.8"/><rect x="1483.88" y="1184.88" width="9" height="59.93" fill="#7f4f72" stroke="#fff" stroke-width="0.8"/><rect x="1495.57" y="1306.95" width="9" height="1.85" fill="#eb8126" stroke="#fff" stroke-width="0.8"/><rect x="1495.57" y="1279.80" width="9" height="27.15" fill="#e8b962" stroke="#fff" stroke-width="0.8"/><rect x="1495.57" y="1264.84" width="9" height="14.97" fill="#eb9d7b" stroke="#fff" stroke-width="0.8"/><rect x="1495.57" y="1255.28" width="9" height="9.55" fill="#e17c7c" stroke="#fff" stroke-width="0.8"/><rect x="1495.57" y="1249.23" width="9" height="6.05" fill="#a85a71" stroke="#fff" stroke-width="0.8"/><rect x="1495.57" y="1130.85" width="9" height="118.38" fill="#7f4f72" stroke="#fff" stroke-width="0.8"/><rect x="1507.27" y="1294.06" width="9" height="14.74" fill="#eb8126" stroke="#fff" stroke-width="0.8"/><rect x="1507.27" y="1251.55" width="9" height="42.51" fill="#e8b962" stroke="#fff" stroke-width="0.8"/><rect x="1507.27" y="1235.63" width="9" height="15.92" fill="#eb9d7b" stroke="#fff" stroke-width="0.8"/><rect x="1507.27" y="1227.30" width="9" height="8.32" fill="#e17c7c" stroke="#fff" stroke-width="0.8"/><rect x="1507.27" y="1214.73" width="9" height="12.58" fill="#a85a71" stroke="#fff" stroke-width="0.8"/><rect x="1507.27" y="1140.81" width="9" height="73.91" fill="#7f4f72" stroke="#fff" stroke-width="0.8"/><rect x="1518.97" y="1301.58" width="9" height="7.22" fill="#eb8126" stroke="#fff" stroke-width="0.8"/><rect x="1518.97" y="1275.38" width="9" height="26.21" fill="#e8b962" stroke="#fff" stroke-width="0.8"/><rect x="1518.97" y="1245.25" width="9" height="30.13" fill="#eb9d7b" stroke="#fff" stroke-width="0.8"/><rect x="1518.97" y="1228.73" width="9" height="16.52" fill="#e17c7c" stroke="#fff" stroke-width="0.8"/><rect x="1518.97" y="1213.75" width="9" height="14.98" fill="#a85a71" stroke="#fff" stroke-width="0.8"/><rect x="1518.97" y="1128.09" width="9" height="85.66" fill="#7f4f72" stroke="#fff" stroke-width="0.8"/><rect x="1530.67" y="1299.82" width="9" height="8.98" fill="#eb8126" stroke="#fff" stroke-width="0.8"/><rect x="1530.67" y="1274.84" width="9" height="24.98" fill="#e8b962" stroke="#fff" stroke-width="0.8"/><rect x="1530.67" y="1259.86" width="9" height="14.98" fill="#eb9d7b" stroke="#fff" stroke-width="0.8"/><rect x="1530.67" y="1250.54" width="9" height="9.32" fill="#e17c7c" stroke="#fff" stroke-width="0.8"/><rect x="1530.67" y="1239.63" width="9" height="10.90" fill="#a85a71" stroke="#fff" stroke-width="0.8"/><rect x="1530.67" y="1125.69" width="9" height="113.94" fill="#7f4f72" stroke="#fff" stroke-width="0.8"/><rect x="1542.37" y="1294.73" width="9" height="14.07" fill="#eb8126" stroke="#fff" stroke-width="0.8"/><rect x="1542.37" y="1267.24" width="9" height="27.49" fill="#e8b962" stroke="#fff" stroke-width="0.8"/><rect x="1542.37" y="1253.87" width="9" height="13.38" fill="#eb9d7b" stroke="#fff" stroke-width="0.8"/><rect x="1542.37" y="1237.81" width="9" height="16.05" fill="#e17c7c" stroke="#fff" stroke-width="0.8"/><rect x="1542.37" y="1221.56" width="9" height="16.25" fill="#a85a71" stroke="#fff" stroke-width="0.8"/><rect x="1542.37" y="1162.02" width="9" height="59.55" fill="#7f4f72" stroke="#fff" stroke-width="0.8"/><rect x="1554.07" y="1304.79" width="9" height="4.01" fill="#eb8126" stroke="#fff" stroke-width="0.8"/><rect x="1554.07" y="1264.64" width="9" height="40.16" fill="#e8b962" stroke="#fff" stroke-width="0.8"/><rect x="1554.07" y="1251.18" width="9" height="13.46" fill="#eb9d7b" stroke="#fff" stroke-width="0.8"/><rect x="1554.07" y="1239.80" width="9" height="11.38" fill="#e17c7c" stroke="#fff" stroke-width="0.8"/><rect x="1554.07" y="1214.42" width="9" height="25.38" fill="#a85a71" stroke="#fff" stroke-width="0.8"/><rect x="1554.07" y="1127.72" width="9" height="86.71" fill="#7f4f72" stroke="#fff" stroke-width="0.8"/><rect x="1565.77" y="1294.22" width="9" height="14.58" fill="#eb8126" stroke="#fff" stroke-width="0.8"/><rect x="1565.77" y="1248.98" width="9" height="45.24" fill="#e8b962" stroke="#fff" stroke-width="0.8"/><rect x="1565.77" y="1230.78" width="9" height="18.20" fill="#eb9d7b" stroke="#fff" stroke-width="0.8"/><rect x="1565.77" y="1221.19" width="9" height="9.59" fill="#e17c7c" stroke="#fff" stroke-width="0.8"/><rect x="1565.77" y="1212.27" width="9" height="8.92" fill="#a85a71" stroke="#fff" stroke-width="0.8"/><rect x="1565.77" y="1145.61" width="9" height="66.66" fill="#7f4f72" stroke="#fff" stroke-width="0.8"/><rect x="1577.47" y="1295.57" width="9" height="13.23" fill="#eb8126" stroke="#fff" stroke-width="0.8"/><rect x="1577.47" y="1255.76" width="9" height="39.81" fill="#e8b962" stroke="#fff" stroke-width="0.8"/><rect x="1577.47" y="1227.05" width="9" height="28.71" fill="#eb9d7b" stroke="#fff" stroke-width="0.8"/><rect x="1577.47" y="1217.87" width="9" height="9.18" fill="#e17c7c" stroke="#fff" stroke-width="0.8"/><rect x="1577.47" y="1207.82" width="9" height="10.06" fill="#a85a71" stroke="#fff" stroke-width="0.8"/><rect x="1577.47" y="1154.27" width="9" height="53.54" fill="#7f4f72" stroke="#fff" stroke-width="0.8"/><rect x="1589.17" y="1298.16" width="9" height="10.64" fill="#eb8126" stroke="#fff" stroke-width="0.8"/><rect x="1589.17" y="1255.94" width="9" height="42.22" fill="#e8b962" stroke="#fff" stroke-width="0.8"/><rect x="1589.17" y="1232.68" width="9" height="23.26" fill="#eb9d7b" stroke="#fff" stroke-width="0.8"/><rect x="1589.17" y="1221.55" width="9" height="11.13" fill="#e17c7c" stroke="#fff" stroke-width="0.8"/><rect x="1589.17" y="1204.50" width="9" height="17.04" fill="#a85a71" stroke="#fff" stroke-width="0.8"/><rect x="1589.17" y="1178.43" width="9" height="26.07" fill="#7f4f72" stroke="#fff" stroke-width="0.8"/><rect x="1600.87" y="1296.04" width="9" height="12.76" fill="#eb8126" stroke="#fff" stroke-width="0.8"/><rect x="1600.87" y="1266.39" width="9" height="29.65" fill="#e8b962" stroke="#fff" stroke-width="0.8"/><rect x="1600.87" y="1242.98" width="9" height="23.41" fill="#eb9d7b" stroke="#fff" stroke-width="0.8"/><rect x="1600.87" y="1233.51" width="9" height="9.47" fill="#e17c7c" stroke="#fff" stroke-width="0.8"/><rect x="1600.87" y="1227.39" width="9" height="6.12" fill="#a85a71" stroke="#fff" stroke-width="0.8"/><rect x="1600.87" y="1152.61" width="9" height="74.78" fill="#7f4f72" stroke="#fff" stroke-width="0.8"/><rect x="1612.56" y="1306.54" width="9" height="2.26" fill="#eb8126" stroke="#fff" stroke-width="0.8"/><rect x="1612.56" y="1275.14" width="9" height="31.40" fill="#e8b962" stroke="#fff" stroke-width="0.8"/><rect x="1612.56" y="1256.98" width="9" height="18.17" fill="#eb9d7b" stroke="#fff" stroke-width="0.8"/><rect x="1612.56" y="1243.78" width="9" height="13.19" fill="#e17c7c" stroke="#fff" stroke-width="0.8"/><rect x="1612.56" y="1218.85" width="9" height="24.93" fill="#a85a71" stroke="#fff" stroke-width="0.8"/><rect x="1612.56" y="1142.29" width="9" height="76.56" fill="#7f4f72" stroke="#fff" stroke-width="0.8"/><rect x="1624.26" y="1300.36" width="9" height="8.44" fill="#eb8126" stroke="#fff" stroke-width="0.8"/><rect x="1624.26" y="1247.13" width="9" height="53.23" fill="#e8b962" stroke="#fff" stroke-width="0.8"/><rect x="1624.26" y="1214.18" width="9" height="32.95" fill="#eb9d7b" stroke="#fff" stroke-width="0.8"/><rect x="1624.26" y="1198.08" width="9" height="16.10" fill="#e17c7c" stroke="#fff" stroke-width="0.8"/><rect x="1624.26" y="1185.15" width="9" height="12.93" fill="#a85a71" stroke="#fff" stroke-width="0.8"/><rect x="1624.26" y="848.72" width="9" height="336.43" fill="#7f4f72" stroke="#fff" stroke-width="0.8"/><rect x="1635.96" y="1303.70" width="9" height="5.10" fill="#eb8126" stroke="#fff" stroke-width="0.8"/><rect x="1635.96" y="1274.05" width="9" height="29.66" fill="#e8b962" stroke="#fff" stroke-width="0.8"/><rect x="1635.96" y="1257.15" width="9" height="16.90" fill="#eb9d7b" stroke="#fff" stroke-width="0.8"/><rect x="1635.96" y="1249.36" width="9" height="7.79" fill="#e17c7c" stroke="#fff" stroke-width="0.8"/><rect x="1635.96" y="1231.16" width="9" height="18.19" fill="#a85a71" stroke="#fff" stroke-width="0.8"/><rect x="1635.96" y="1102.27" width="9" height="128.89" fill="#7f4f72" stroke="#fff" stroke-width="0.8"/><rect x="1647.66" y="1293.67" width="9" height="15.13" fill="#eb8126" stroke="#fff" stroke-width="0.8"/><rect x="1647.66" y="1243.65" width="9" height="50.02" fill="#e8b962" stroke="#fff" stroke-width="0.8"/><rect x="1647.66" y="1221.02" width="9" height="22.63" fill="#eb9d7b" stroke="#fff" stroke-width="0.8"/><rect x="1647.66" y="1208.26" width="9" height="12.76" fill="#e17c7c" stroke="#fff" stroke-width="0.8"/><rect x="1647.66" y="1186.51" width="9" height="21.75" fill="#a85a71" stroke="#fff" stroke-width="0.8"/><rect x="1647.66" y="1134.17" width="9" height="52.34" fill="#7f4f72" stroke="#fff" stroke-width="0.8"/><rect x="1659.36" y="1305.74" width="9" height="3.06" fill="#eb8126" stroke="#fff" stroke-width="0.8"/><rect x="1659.36" y="1262.14" width="9" height="43.59" fill="#e8b962" stroke="#fff" stroke-width="0.8"/><rect x="1659.36" y="1231.11" width="9" height="31.03" fill="#eb9d7b" stroke="#fff" stroke-width="0.8"/><rect x="1659.36" y="1217.07" width="9" height="14.04" fill="#e17c7c" stroke="#fff" stroke-width="0.8"/><rect x="1659.36" y="1196.54" width="9" height="20.53" fill="#a85a71" stroke="#fff" stroke-width="0.8"/><rect x="1659.36" y="1168.47" width="9" height="28.07" fill="#7f4f72" stroke="#fff" stroke-width="0.8"/><rect x="1671.06" y="1299.90" width="9" height="8.90" fill="#eb8126" stroke="#fff" stroke-width="0.8"/><rect x="1671.06" y="1271.85" width="9" height="28.05" fill="#e8b962" stroke="#fff" stroke-width="0.8"/><rect x="1671.06" y="1242.94" width="9" height="28.91" fill="#eb9d7b" stroke="#fff" stroke-width="0.8"/><rect x="1671.06" y="1233.72" width="9" height="9.21" fill="#e17c7c" stroke="#fff" stroke-width="0.8"/><rect x="1671.06" y="1211.95" width="9" height="21.78" fill="#a85a71" stroke="#fff" stroke-width="0.8"/><rect x="1671.06" y="1161.65" width="9" height="50.30" fill="#7f4f72" stroke="#fff" stroke-width="0.8"/><rect x="1682.76" y="1292.62" width="9" height="16.18" fill="#eb8126" stroke="#fff" stroke-width="0.8"/><rect x="1682.76" y="1257.36" width="9" height="35.27" fill="#e8b962" stroke="#fff" stroke-width="0.8"/><rect x="1682.76" y="1236.31" width="9" height="21.05" fill="#eb9d7b" stroke="#fff" stroke-width="0.8"/><rect x="1682.76" y="1220.30" width="9" height="16.01" fill="#e17c7c" stroke="#fff" stroke-width="0.8"/><rect x="1682.76" y="1200.06" width="9" height="20.23" fill="#a85a71" stroke="#fff" stroke-width="0.8"/><rect x="1682.76" y="1151.32" width="9" height="48.74" fill="#7f4f72" stroke="#fff" stroke-width="0.8"/><rect x="1694.46" y="1304.45" width="9" height="4.35" fill="#eb8126" stroke="#fff" stroke-width="0.8"/><rect x="1694.46" y="1278.10" width="9" height="26.34" fill="#e8b962" stroke="#fff" stroke-width="0.8"/><rect x="1694.46" y="1262.13" width="9" height="15.97" fill="#eb9d7b" stroke="#fff" stroke-width="0.8"/><rect x="1694.46" y="1246.59" width="9" height="15.54" fill="#e17c7c" stroke="#fff" stroke-width="0.8"/><rect x="1694.46" y="1224.70" width="9" height="21.89" fill="#a85a71" stroke="#fff" stroke-width="0.8"/><rect x="1694.46" y="1168.66" width="9" height="56.04" fill="#7f4f72" stroke="#fff" stroke-width="0.8"/><rect x="1706.16" y="1304.80" width="9" height="4.00" fill="#eb8126" stroke="#fff" stroke-width="0.8"/><rect x="1706.16" y="1255.24" width="9" height="49.56" fill="#e8b962" stroke="#fff" stroke-width="0.8"/><rect x="1706.16" y="1222.45" width="9" height="32.79" fill="#eb9d7b" stroke="#fff" stroke-width="0.8"/><rect x="1706.16" y="1209.64" width="9" height="12.80" fill="#e17c7c" stroke="#fff" stroke-width="0.8"/><rect x="1706.16" y="1197.00" width="9" height="12.64" fill="#a85a71" stroke="#fff" stroke-width="0.8"/><rect x="1706.16" y="1158.33" width="9" height="38.67" fill="#7f4f72" stroke="#fff" stroke-width="0.8"/><rect x="1717.86" y="1298.86" width="9" height="9.94" fill="#eb8126" stroke="#fff" stroke-width="0.8"/><rect x="1717.86" y="1272.39" width="9" height="26.48" fill="#e8b962" stroke="#fff" stroke-width="0.8"/><rect x="1717.86" y="1259.19" width="9" height="13.20" fill="#eb9d7b" stroke="#fff" stroke-width="0.8"/><rect x="1717.86" y="1242.92" width="9" height="16.27" fill="#e17c7c" stroke="#fff" stroke-width="0.8"/><rect x="1717.86" y="1224.21" width="9" height="18.71" fill="#a85a71" stroke="#fff" stroke-width="0.8"/><rect x="1717.86" y="1145.61" width="9" height="78.60" fill="#7f4f72" stroke="#fff" stroke-width="0.8"/><rect x="1729.55" y="1299.85" width="9" height="8.95" fill="#eb8126" stroke="#fff" stroke-width="0.8"/><rect x="1729.55" y="1250.42" width="9" height="49.43" fill="#e8b962" stroke="#fff" stroke-width="0.8"/><rect x="1729.55" y="1230.22" width="9" height="20.20" fill="#eb9d7b" stroke="#fff" stroke-width="0.8"/><rect x="1729.55" y="1216.10" width="9" height="14.12" fill="#e17c7c" stroke="#fff" stroke-width="0.8"/><rect x="1729.55" y="1195.36" width="9" height="20.74" fill="#a85a71" stroke="#fff" stroke-width="0.8"/><rect x="1729.55" y="1167.00" width="9" height="28.36" fill="#7f4f72" stroke="#fff" stroke-width="0.8"/><rect x="1741.25" y="1303.84" width="9" height="4.96" fill="#eb8126" stroke="#fff" stroke-width="0.8"/><rect x="1741.25" y="1273.36" width="9" height="30.49" fill="#e8b962" stroke="#fff" stroke-width="0.8"/><rect x="1741.25" y="1254.51" width="9" height="18.85" fill="#eb9d7b" stroke="#fff" stroke-width="0.8"/><rect x="1741.25" y="1246.31" width="9" height="8.19" fill="#e17c7c" stroke="#fff" stroke-width="0.8"/><rect x="1741.25" y="1228.88" width="9" height="17.43" fill="#a85a71" stroke="#fff" stroke-width="0.8"/><rect x="1741.25" y="1140.81" width="9" height="88.07" fill="#7f4f72" stroke="#fff" stroke-width="0.8"/><rect x="1752.95" y="1303.13" width="9" height="5.67" fill="#eb8126" stroke="#fff" stroke-width="0.8"/><rect x="1752.95" y="1267.09" width="9" height="36.04" fill="#e8b962" stroke="#fff" stroke-width="0.8"/><rect x="1752.95" y="1251.53" width="9" height="15.57" fill="#eb9d7b" stroke="#fff" stroke-width="0.8"/><rect x="1752.95" y="1235.93" width="9" height="15.60" fill="#e17c7c" stroke="#fff" stroke-width="0.8"/><rect x="1752.95" y="1223.22" width="9" height="12.71" fill="#a85a71" stroke="#fff" stroke-width="0.8"/><rect x="1752.95" y="1176.77" width="9" height="46.45" fill="#7f4f72" stroke="#fff" stroke-width="0.8"/><rect x="1764.65" y="1300.20" width="9" height="8.60" fill="#eb8126" stroke="#fff" stroke-width="0.8"/><rect x="1764.65" y="1258.71" width="9" height="41.49" fill="#e8b962" stroke="#fff" stroke-width="0.8"/><rect x="1764.65" y="1227.46" width="9" height="31.25" fill="#eb9d7b" stroke="#fff" stroke-width="0.8"/><rect x="1764.65" y="1217.27" width="9" height="10.19" fill="#e17c7c" stroke="#fff" stroke-width="0.8"/><rect x="1764.65" y="1193.12" width="9" height="24.15" fill="#a85a71" stroke="#fff" stroke-width="0.8"/><rect x="1764.65" y="1143.21" width="9" height="49.91" fill="#7f4f72" stroke="#fff" stroke-width="0.8"/><rect x="1776.35" y="1299.56" width="9" height="9.24" fill="#eb8126" stroke="#fff" stroke-width="0.8"/><rect x="1776.35" y="1259.78" width="9" height="39.78" fill="#e8b962" stroke="#fff" stroke-width="0.8"/><rect x="1776.35" y="1236.25" width="9" height="23.53" fill="#eb9d7b" stroke="#fff" stroke-width="0.8"/><rect x="1776.35" y="1230.51" width="9" height="5.74" fill="#e17c7c" stroke="#fff" stroke-width="0.8"/><rect x="1776.35" y="1216.05" width="9" height="14.46" fill="#a85a71" stroke="#fff" stroke-width="0.8"/><rect x="1776.35" y="1140.81" width="9" height="75.24" fill="#7f4f72" stroke="#fff" stroke-width="0.8"/><rect x="1788.05" y="1304.25" width="9" height="4.55" fill="#eb8126" stroke="#fff" stroke-width="0.8"/><rect x="1788.05" y="1282.00" width="9" height="22.26" fill="#e8b962" stroke="#fff" stroke-width="0.8"/><rect x="1788.05" y="1252.88" width="9" height="29.12" fill="#eb9d7b" stroke="#fff" stroke-width="0.8"/><rect x="1788.05" y="1245.44" width="9" height="7.44" fill="#e17c7c" stroke="#fff" stroke-width="0.8"/><rect x="1788.05" y="1230.30" width="9" height="15.14" fill="#a85a71" stroke="#fff" stroke-width="0.8"/><rect x="1788.05" y="1129.19" width="9" height="101.11" fill="#7f4f72" stroke="#fff" stroke-width="0.8"/><rect x="1799.75" y="1296.26" width="9" height="12.54" fill="#eb8126" stroke="#fff" stroke-width="0.8"/><rect x="1799.75" y="1255.66" width="9" height="40.60" fill="#e8b962" stroke="#fff" stroke-width="0.8"/><rect x="1799.75" y="1236.14" width="9" height="19.52" fill="#eb9d7b" stroke="#fff" stroke-width="0.8"/><rect x="1799.75" y="1224.87" width="9" height="11.27" fill="#e17c7c" stroke="#fff" stroke-width="0.8"/><rect x="1799.75" y="1208.07" width="9" height="16.80" fill="#a85a71" stroke="#fff" stroke-width="0.8"/><rect x="1799.75" y="1146.90" width="9" height="61.18" fill="#7f4f72" stroke="#fff" stroke-width="0.8"/><rect x="1811.45" y="1295.39" width="9" height="13.41" fill="#eb8126" stroke="#fff" stroke-width="0.8"/><rect x="1811.45" y="1269.74" width="9" height="25.65" fill="#e8b962" stroke="#fff" stroke-width="0.8"/><rect x="1811.45" y="1245.46" width="9" height="24.27" fill="#eb9d7b" stroke="#fff" stroke-width="0.8"/><rect x="1811.45" y="1237.18" width="9" height="8.28" fill="#e17c7c" stroke="#fff" stroke-width="0.8"/><rect x="1811.45" y="1226.03" width="9" height="11.15" fill="#a85a71" stroke="#fff" stroke-width="0.8"/><rect x="1811.45" y="1143.21" width="9" height="82.82" fill="#7f4f72" stroke="#fff" stroke-width="0.8"/><rect x="1823.15" y="1295.56" width="9" height="13.24" fill="#eb8126" stroke="#fff" stroke-width="0.8"/><rect x="1823.15" y="1256.58" width="9" height="38.98" fill="#e8b962" stroke="#fff" stroke-width="0.8"/><rect x="1823.15" y="1232.28" width="9" height="24.30" fill="#eb9d7b" stroke="#fff" stroke-width="0.8"/><rect x="1823.15" y="1218.34" width="9" height="13.94" fill="#e17c7c" stroke="#fff" stroke-width="0.8"/><rect x="1823.15" y="1194.30" width="9" height="24.04" fill="#a85a71" stroke="#fff" stroke-width="0.8"/><rect x="1823.15" y="1162.02" width="9" height="32.28" fill="#7f4f72" stroke="#fff" stroke-width="0.8"/><rect x="1834.85" y="1300.74" width="9" height="8.06" fill="#eb8126" stroke="#fff" stroke-width="0.8"/><rect x="1834.85" y="1259.91" width="9" height="40.83" fill="#e8b962" stroke="#fff" stroke-width="0.8"/><rect x="1834.85" y="1237.64" width="9" height="22.27" fill="#eb9d7b" stroke="#fff" stroke-width="0.8"/><rect x="1834.85" y="1226.87" width="9" height="10.77" fill="#e17c7c" stroke="#fff" stroke-width="0.8"/><rect x="1834.85" y="1208.04" width="9" height="18.83" fill="#a85a71" stroke="#fff" stroke-width="0.8"/><rect x="1834.85" y="1182.85" width="9" height="25.19" fill="#7f4f72" stroke="#fff" stroke-width="0.8"/><rect x="1846.54" y="1300.28" width="9" height="8.52" fill="#eb8126" stroke="#fff" stroke-width="0.8"/><rect x="1846.54" y="1260.45" width="9" height="39.83" fill="#e8b962" stroke="#fff" stroke-width="0.8"/><rect x="1846.54" y="1237.85" width="9" height="22.60" fill="#eb9d7b" stroke="#fff" stroke-width="0.8"/><rect x="1846.54" y="1221.90" width="9" height="15.95" fill="#e17c7c" stroke="#fff" stroke-width="0.8"/><rect x="1846.54" y="1202.19" width="9" height="19.71" fill="#a85a71" stroke="#fff" stroke-width="0.8"/><rect x="1846.54" y="1143.21" width="9" height="58.98" fill="#7f4f72" stroke="#fff" stroke-width="0.8"/><rect x="1858.24" y="1294.93" width="9" height="13.87" fill="#eb8126" stroke="#fff" stroke-width="0.8"/><rect x="1858.24" y="1244.80" width="9" height="50.13" fill="#e8b962" stroke="#fff" stroke-width="0.8"/><rect x="1858.24" y="1227.74" width="9" height="17.06" fill="#eb9d7b" stroke="#fff" stroke-width="0.8"/><rect x="1858.24" y="1216.74" width="9" height="11.00" fill="#e17c7c" stroke="#fff" stroke-width="0.8"/><rect x="1858.24" y="1193.59" width="9" height="23.15" fill="#a85a71" stroke="#fff" stroke-width="0.8"/><rect x="1858.24" y="1164.78" width="9" height="28.80" fill="#7f4f72" stroke="#fff" stroke-width="0.8"/><rect x="1869.94" y="1294.56" width="9" height="14.24" fill="#eb8126" stroke="#fff" stroke-width="0.8"/><rect x="1869.94" y="1267.88" width="9" height="26.68" fill="#e8b962" stroke="#fff" stroke-width="0.8"/><rect x="1869.94" y="1252.51" width="9" height="15.37" fill="#eb9d7b" stroke="#fff" stroke-width="0.8"/><rect x="1869.94" y="1242.09" width="9" height="10.42" fill="#e17c7c" stroke="#fff" stroke-width="0.8"/><rect x="1869.94" y="1235.08" width="9" height="7.00" fill="#a85a71" stroke="#fff" stroke-width="0.8"/><rect x="1869.94" y="1168.10" width="9" height="66.98" fill="#7f4f72" stroke="#fff" stroke-width="0.8"/><rect x="1881.64" y="1303.41" width="9" height="5.39" fill="#eb8126" stroke="#fff" stroke-width="0.8"/><rect x="1881.64" y="1278.85" width="9" height="24.56" fill="#e8b962" stroke="#fff" stroke-width="0.8"/><rect x="1881.64" y="1252.36" width="9" height="26.49" fill="#eb9d7b" stroke="#fff" stroke-width="0.8"/><rect x="1881.64" y="1238.16" width="9" height="14.21" fill="#e17c7c" stroke="#fff" stroke-width="0.8"/><rect x="1881.64" y="1214.43" width="9" height="23.73" fill="#a85a71" stroke="#fff" stroke-width="0.8"/><rect x="1881.64" y="1134.54" width="9" height="79.89" fill="#7f4f72" stroke="#fff" stroke-width="0.8"/><rect x="1893.34" y="1304.94" width="9" height="3.86" fill="#eb8126" stroke="#fff" stroke-width="0.8"/><rect x="1893.34" y="1261.92" width="9" height="43.02" fill="#e8b962" stroke="#fff" stroke-width="0.8"/><rect x="1893.34" y="1237.27" width="9" height="24.65" fill="#eb9d7b" stroke="#fff" stroke-width="0.8"/><rect x="1893.34" y="1230.60" width="9" height="6.67" fill="#e17c7c" stroke="#fff" stroke-width="0.8"/><rect x="1893.34" y="1208.63" width="9" height="21.97" fill="#a85a71" stroke="#fff" stroke-width="0.8"/><rect x="1893.34" y="1183.59" width="9" height="25.04" fill="#7f4f72" stroke="#fff" stroke-width="0.8"/><rect x="1905.04" y="1296.67" width="9" height="12.13" fill="#eb8126" stroke="#fff" stroke-width="0.8"/><rect x="1905.04" y="1274.54" width="9" height="22.14" fill="#e8b962" stroke="#fff" stroke-width="0.8"/><rect x="1905.04" y="1250.28" width="9" height="24.25" fill="#eb9d7b" stroke="#fff" stroke-width="0.8"/><rect x="1905.04" y="1242.80" width="9" height="7.48" fill="#e17c7c" stroke="#fff" stroke-width="0.8"/><rect x="1905.04" y="1231.20" width="9" height="11.60" fill="#a85a71" stroke="#fff" stroke-width="0.8"/><rect x="1905.04" y="1211.81" width="9" height="19.40" fill="#7f4f72" stroke="#fff" stroke-width="0.8"/><rect x="1916.74" y="1293.17" width="9" height="15.63" fill="#eb8126" stroke="#fff" stroke-width="0.8"/><rect x="1916.74" y="1245.90" width="9" height="47.28" fill="#e8b962" stroke="#fff" stroke-width="0.8"/><rect x="1916.74" y="1230.52" width="9" height="15.38" fill="#eb9d7b" stroke="#fff" stroke-width="0.8"/><rect x="1916.74" y="1220.73" width="9" height="9.79" fill="#e17c7c" stroke="#fff" stroke-width="0.8"/><rect x="1916.74" y="1205.54" width="9" height="15.19" fill="#a85a71" stroke="#fff" stroke-width="0.8"/><rect x="1916.74" y="1179.72" width="9" height="25.82" fill="#7f4f72" stroke="#fff" stroke-width="0.8"/><rect x="1928.44" y="1301.95" width="9" height="6.85" fill="#eb8126" stroke="#fff" stroke-width="0.8"/><rect x="1928.44" y="1273.33" width="9" height="28.63" fill="#e8b962" stroke="#fff" stroke-width="0.8"/><rect x="1928.44" y="1253.96" width="9" height="19.37" fill="#eb9d7b" stroke="#fff" stroke-width="0.8"/><rect x="1928.44" y="1240.44" width="9" height="13.52" fill="#e17c7c" stroke="#fff" stroke-width="0.8"/><rect x="1928.44" y="1234.51" width="9" height="5.93" fill="#a85a71" stroke="#fff" stroke-width="0.8"/><rect x="1928.44" y="1204.43" width="9" height="30.08" fill="#7f4f72" stroke="#fff" stroke-width="0.8"/><rect x="1940.14" y="1298.78" width="9" height="10.02" fill="#eb8126" stroke="#fff" stroke-width="0.8"/><rect x="1940.14" y="1262.03" width="9" height="36.75" fill="#e8b962" stroke="#fff" stroke-width="0.8"/><rect x="1940.14" y="1248.76" width="9" height="13.27" fill="#eb9d7b" stroke="#fff" stroke-width="0.8"/><rect x="1940.14" y="1239.56" width="9" height="9.20" fill="#e17c7c" stroke="#fff" stroke-width="0.8"/><rect x="1940.14" y="1221.37" width="9" height="18.19" fill="#a85a71" stroke="#fff" stroke-width="0.8"/><rect x="1940.14" y="1179.72" width="9" height="41.65" fill="#7f4f72" stroke="#fff" stroke-width="0.8"/><rect x="1951.84" y="1299.40" width="9" height="9.40" fill="#eb8126" stroke="#fff" stroke-width="0.8"/><rect x="1951.84" y="1275.14" width="9" height="24.26" fill="#e8b962" stroke="#fff" stroke-width="0.8"/><rect x="1951.84" y="1242.25" width="9" height="32.89" fill="#eb9d7b" stroke="#fff" stroke-width="0.8"/><rect x="1951.84" y="1227.99" width="9" height="14.25" fill="#e17c7c" stroke="#fff" stroke-width="0.8"/><rect x="1951.84" y="1202.75" width="9" height="25.24" fill="#a85a71" stroke="#fff" stroke-width="0.8"/><rect x="1951.84" y="1155.93" width="9" height="46.82" fill="#7f4f72" stroke="#fff" stroke-width="0.8"/><rect x="1963.53" y="1305.41" width="9" height="3.39" fill="#eb8126" stroke="#fff" stroke-width="0.8"/><rect x="1963.53" y="1274.47" width="9" height="30.94" fill="#e8b962" stroke="#fff" stroke-width="0.8"/><rect x="1963.53" y="1260.76" width="9" height="13.71" fill="#eb9d7b" stroke="#fff" stroke-width="0.8"/><rect x="1963.53" y="1246.61" width="9" height="14.15" fill="#e17c7c" stroke="#fff" stroke-width="0.8"/><rect x="1963.53" y="1235.59" width="9" height="11.02" fill="#a85a71" stroke="#fff" stroke-width="0.8"/><rect x="1963.53" y="1168.66" width="9" height="66.93" fill="#7f4f72" stroke="#fff" stroke-width="0.8"/><rect x="1975.23" y="1305.04" width="9" height="3.76" fill="#eb8126" stroke="#fff" stroke-width="0.8"/><rect x="1975.23" y="1268.90" width="9" height="36.14" fill="#e8b962" stroke="#fff" stroke-width="0.8"/><rect x="1975.23" y="1237.51" width="9" height="31.40" fill="#eb9d7b" stroke="#fff" stroke-width="0.8"/><rect x="1975.23" y="1222.91" width="9" height="14.59" fill="#e17c7c" stroke="#fff" stroke-width="0.8"/><rect x="1975.23" y="1212.14" width="9" height="10.78" fill="#a85a71" stroke="#fff" stroke-width="0.8"/><rect x="1975.23" y="1180.09" width="9" height="32.05" fill="#7f4f72" stroke="#fff" stroke-width="0.8"/><rect x="1986.93" y="1305.12" width="9" height="3.68" fill="#eb8126" stroke="#fff" stroke-width="0.8"/><rect x="1986.93" y="1257.21" width="9" height="47.90" fill="#e8b962" stroke="#fff" stroke-width="0.8"/><rect x="1986.93" y="1234.93" width="9" height="22.28" fill="#eb9d7b" stroke="#fff" stroke-width="0.8"/><rect x="1986.93" y="1222.84" width="9" height="12.09" fill="#e17c7c" stroke="#fff" stroke-width="0.8"/><rect x="1986.93" y="1216.16" width="9" height="6.69" fill="#a85a71" stroke="#fff" stroke-width="0.8"/><rect x="1986.93" y="1193.00" width="9" height="23.16" fill="#7f4f72" stroke="#fff" stroke-width="0.8"/><rect x="1998.63" y="1306.18" width="9" height="2.62" fill="#eb8126" stroke="#fff" stroke-width="0.8"/><rect x="1998.63" y="1262.37" width="9" height="43.81" fill="#e8b962" stroke="#fff" stroke-width="0.8"/><rect x="1998.63" y="1241.39" width="9" height="20.98" fill="#eb9d7b" stroke="#fff" stroke-width="0.8"/><rect x="1998.63" y="1235.22" width="9" height="6.17" fill="#e17c7c" stroke="#fff" stroke-width="0.8"/><rect x="1998.63" y="1211.29" width="9" height="23.93" fill="#a85a71" stroke="#fff" stroke-width="0.8"/><rect x="1998.63" y="1186.91" width="9" height="24.38" fill="#7f4f72" stroke="#fff" stroke-width="0.8"/><rect x="2010.33" y="1297.60" width="9" height="11.20" fill="#eb8126" stroke="#fff" stroke-width="0.8"/><rect x="2010.33" y="1248.86" width="9" height="48.74" fill="#e8b962" stroke="#fff" stroke-width="0.8"/><rect x="2010.33" y="1234.25" width="9" height="14.61" fill="#eb9d7b" stroke="#fff" stroke-width="0.8"/><rect x="2010.33" y="1219.25" width="9" height="15.01" fill="#e17c7c" stroke="#fff" stroke-width="0.8"/><rect x="2010.33" y="1212.37" width="9" height="6.88" fill="#a85a71" stroke="#fff" stroke-width="0.8"/><rect x="2010.33" y="1165.34" width="9" height="47.03" fill="#7f4f72" stroke="#fff" stroke-width="0.8"/><rect x="2022.03" y="1294.23" width="9" height="14.57" fill="#eb8126" stroke="#fff" stroke-width="0.8"/><rect x="2022.03" y="1257.04" width="9" height="37.19" fill="#e8b962" stroke="#fff" stroke-width="0.8"/><rect x="2022.03" y="1237.25" width="9" height="19.79" fill="#eb9d7b" stroke="#fff" stroke-width="0.8"/><rect x="2022.03" y="1225.60" width="9" height="11.65" fill="#e17c7c" stroke="#fff" stroke-width="0.8"/><rect x="2022.03" y="1201.27" width="9" height="24.33" fill="#a85a71" stroke="#fff" stroke-width="0.8"/><rect x="2022.03" y="1144.68" width="9" height="56.59" fill="#7f4f72" stroke="#fff" stroke-width="0.8"/><rect x="2033.73" y="1303.00" width="9" height="5.80" fill="#eb8126" stroke="#fff" stroke-width="0.8"/><rect x="2033.73" y="1276.59" width="9" height="26.42" fill="#e8b962" stroke="#fff" stroke-width="0.8"/><rect x="2033.73" y="1252.99" width="9" height="23.60" fill="#eb9d7b" stroke="#fff" stroke-width="0.8"/><rect x="2033.73" y="1244.82" width="9" height="8.17" fill="#e17c7c" stroke="#fff" stroke-width="0.8"/><rect x="2033.73" y="1237.07" width="9" height="7.75" fill="#a85a71" stroke="#fff" stroke-width="0.8"/><rect x="2033.73" y="1147.82" width="9" height="89.25" fill="#7f4f72" stroke="#fff" stroke-width="0.8"/><rect x="2045.43" y="1304.57" width="9" height="4.23" fill="#eb8126" stroke="#fff" stroke-width="0.8"/><rect x="2045.43" y="1280.77" width="9" height="23.80" fill="#e8b962" stroke="#fff" stroke-width="0.8"/><rect x="2045.43" y="1263.77" width="9" height="17.00" fill="#eb9d7b" stroke="#fff" stroke-width="0.8"/><rect x="2045.43" y="1254.79" width="9" height="8.98" fill="#e17c7c" stroke="#fff" stroke-width="0.8"/><rect x="2045.43" y="1243.07" width="9" height="11.72" fill="#a85a71" stroke="#fff" stroke-width="0.8"/><rect x="2045.43" y="1171.05" width="9" height="72.02" fill="#7f4f72" stroke="#fff" stroke-width="0.8"/><rect x="2057.13" y="1295.75" width="9" height="13.05" fill="#eb8126" stroke="#fff" stroke-width="0.8"/><rect x="2057.13" y="1264.00" width="9" height="31.75" fill="#e8b962" stroke="#fff" stroke-width="0.8"/><rect x="2057.13" y="1240.95" width="9" height="23.05" fill="#eb9d7b" stroke="#fff" stroke-width="0.8"/><rect x="2057.13" y="1233.45" width="9" height="7.50" fill="#e17c7c" stroke="#fff" stroke-width="0.8"/><rect x="2057.13" y="1220.88" width="9" height="12.57" fill="#a85a71" stroke="#fff" stroke-width="0.8"/><rect x="2057.13" y="1152.61" width="9" height="68.26" fill="#7f4f72" stroke="#fff" stroke-width="0.8"/><rect x="2068.82" y="1306.69" width="9" height="2.11" fill="#eb8126" stroke="#fff" stroke-width="0.8"/><rect x="2068.82" y="1276.25" width="9" height="30.44" fill="#e8b962" stroke="#fff" stroke-width="0.8"/><rect x="2068.82" y="1263.03" width="9" height="13.22" fill="#eb9d7b" stroke="#fff" stroke-width="0.8"/><rect x="2068.82" y="1249.39" width="9" height="13.64" fill="#e17c7c" stroke="#fff" stroke-width="0.8"/><rect x="2068.82" y="1232.68" width="9" height="16.71" fill="#a85a71" stroke="#fff" stroke-width="0.8"/><rect x="2068.82" y="1178.43" width="9" height="54.25" fill="#7f4f72" stroke="#fff" stroke-width="0.8"/><rect x="2080.52" y="1304.16" width="9" height="4.64" fill="#eb8126" stroke="#fff" stroke-width="0.8"/><rect x="2080.52" y="1266.27" width="9" height="37.89" fill="#e8b962" stroke="#fff" stroke-width="0.8"/><rect x="2080.52" y="1234.41" width="9" height="31.87" fill="#eb9d7b" stroke="#fff" stroke-width="0.8"/><rect x="2080.52" y="1227.70" width="9" height="6.71" fill="#e17c7c" stroke="#fff" stroke-width="0.8"/><rect x="2080.52" y="1205.56" width="9" height="22.14" fill="#a85a71" stroke="#fff" stroke-width="0.8"/><rect x="2080.52" y="1152.61" width="9" height="52.94" fill="#7f4f72" stroke="#fff" stroke-width="0.8"/><rect x="2092.22" y="1300.58" width="9" height="8.22" fill="#eb8126" stroke="#fff" stroke-width="0.8"/><rect x="2092.22" y="1262.02" width="9" height="38.56" fill="#e8b962" stroke="#fff" stroke-width="0.8"/><rect x="2092.22" y="1232.19" width="9" height="29.84" fill="#eb9d7b" stroke="#fff" stroke-width="0.8"/><rect x="2092.22" y="1222.30" width="9" height="9.88" fill="#e17c7c" stroke="#fff" stroke-width="0.8"/><rect x="2092.22" y="1206.49" width="9" height="15.81" fill="#a85a71" stroke="#fff" stroke-width="0.8"/><rect x="2092.22" y="1150.95" width="9" height="55.54" fill="#7f4f72" stroke="#fff" stroke-width="0.8"/><rect x="2103.92" y="1297.02" width="9" height="11.78" fill="#eb8126" stroke="#fff" stroke-width="0.8"/><rect x="2103.92" y="1243.25" width="9" height="53.77" fill="#e8b962" stroke="#fff" stroke-width="0.8"/><rect x="2103.92" y="1223.75" width="9" height="19.51" fill="#eb9d7b" stroke="#fff" stroke-width="0.8"/><rect x="2103.92" y="1209.27" width="9" height="14.48" fill="#e17c7c" stroke="#fff" stroke-width="0.8"/><rect x="2103.92" y="1189.75" width="9" height="19.52" fill="#a85a71" stroke="#fff" stroke-width="0.8"/><rect x="2103.92" y="1159.99" width="9" height="29.76" fill="#7f4f72" stroke="#fff" stroke-width="0.8"/><rect x="2115.62" y="1297.57" width="9" height="11.23" fill="#eb8126" stroke="#fff" stroke-width="0.8"/><rect x="2115.62" y="1262.01" width="9" height="35.56" fill="#e8b962" stroke="#fff" stroke-width="0.8"/><rect x="2115.62" y="1242.06" width="9" height="19.96" fill="#eb9d7b" stroke="#fff" stroke-width="0.8"/><rect x="2115.62" y="1235.92" width="9" height="6.13" fill="#e17c7c" stroke="#fff" stroke-width="0.8"/><rect x="2115.62" y="1227.76" width="9" height="8.17" fill="#a85a71" stroke="#fff" stroke-width="0.8"/><rect x="2115.62" y="1175.11" width="9" height="52.65" fill="#7f4f72" stroke="#fff" stroke-width="0.8"/><rect x="2127.32" y="1305.91" width="9" height="2.89" fill="#eb8126" stroke="#fff" stroke-width="0.8"/><rect x="2127.32" y="1259.19" width="9" height="46.72" fill="#e8b962" stroke="#fff" stroke-width="0.8"/><rect x="2127.32" y="1241.10" width="9" height="18.09" fill="#eb9d7b" stroke="#fff" stroke-width="0.8"/><rect x="2127.32" y="1233.76" width="9" height="7.34" fill="#e17c7c" stroke="#fff" stroke-width="0.8"/><rect x="2127.32" y="1226.52" width="9" height="7.25" fill="#a85a71" stroke="#fff" stroke-width="0.8"/><rect x="2127.32" y="1158.33" width="9" height="68.19" fill="#7f4f72" stroke="#fff" stroke-width="0.8"/><rect x="2139.02" y="1294.55" width="9" height="14.25" fill="#eb8126" stroke="#fff" stroke-width="0.8"/><rect x="2139.02" y="1243.52" width="9" height="51.02" fill="#e8b962" stroke="#fff" stroke-width="0.8"/><rect x="2139.02" y="1217.01" width="9" height="26.51" fill="#eb9d7b" stroke="#fff" stroke-width="0.8"/><rect x="2139.02" y="1208.36" width="9" height="8.65" fill="#e17c7c" stroke="#fff" stroke-width="0.8"/><rect x="2139.02" y="1197.92" width="9" height="10.45" fill="#a85a71" stroke="#fff" stroke-width="0.8"/><rect x="2139.02" y="1167.00" width="9" height="30.92" fill="#7f4f72" stroke="#fff" stroke-width="0.8"/><rect x="2150.72" y="1302.63" width="9" height="6.17" fill="#eb8126" stroke="#fff" stroke-width="0.8"/><rect x="2150.72" y="1265.25" width="9" height="37.38" fill="#e8b962" stroke="#fff" stroke-width="0.8"/><rect x="2150.72" y="1249.15" width="9" height="16.10" fill="#eb9d7b" stroke="#fff" stroke-width="0.8"/><rect x="2150.72" y="1238.69" width="9" height="10.46" fill="#e17c7c" stroke="#fff" stroke-width="0.8"/><rect x="2150.72" y="1227.82" width="9" height="10.87" fill="#a85a71" stroke="#fff" stroke-width="0.8"/><rect x="2150.72" y="1149.85" width="9" height="77.97" fill="#7f4f72" stroke="#fff" stroke-width="0.8"/><rect x="2162.42" y="1295.01" width="9" height="13.79" fill="#eb8126" stroke="#fff" stroke-width="0.8"/><rect x="2162.42" y="1248.22" width="9" height="46.79" fill="#e8b962" stroke="#fff" stroke-width="0.8"/><rect x="2162.42" y="1227.58" width="9" height="20.64" fill="#eb9d7b" stroke="#fff" stroke-width="0.8"/><rect x="2162.42" y="1220.50" width="9" height="7.08" fill="#e17c7c" stroke="#fff" stroke-width="0.8"/><rect x="2162.42" y="1198.90" width="9" height="21.60" fill="#a85a71" stroke="#fff" stroke-width="0.8"/><rect x="2162.42" y="1171.42" width="9" height="27.48" fill="#7f4f72" stroke="#fff" stroke-width="0.8"/><rect x="2174.12" y="1302.39" width="9" height="6.41" fill="#eb8126" stroke="#fff" stroke-width="0.8"/><rect x="2174.12" y="1268.43" width="9" height="33.96" fill="#e8b962" stroke="#fff" stroke-width="0.8"/><rect x="2174.12" y="1255.50" width="9" height="12.93" fill="#eb9d7b" stroke="#fff" stroke-width="0.8"/><rect x="2174.12" y="1245.74" width="9" height="9.75" fill="#e17c7c" stroke="#fff" stroke-width="0.8"/><rect x="2174.12" y="1230.58" width="9" height="15.16" fill="#a85a71" stroke="#fff" stroke-width="0.8"/><rect x="2174.12" y="1155.01" width="9" height="75.57" fill="#7f4f72" stroke="#fff" stroke-width="0.8"/><rect x="2185.82" y="1299.54" width="9" height="9.26" fill="#eb8126" stroke="#fff" stroke-width="0.8"/><rect x="2185.82" y="1270.74" width="9" height="28.80" fill="#e8b962" stroke="#fff" stroke-width="0.8"/><rect x="2185.82" y="1247.59" width="9" height="23.15" fill="#eb9d7b" stroke="#fff" stroke-width="0.8"/><rect x="2185.82" y="1242.01" width="9" height="5.59" fill="#e17c7c" stroke="#fff" stroke-width="0.8"/><rect x="2185.82" y="1231.12" width="9" height="10.89" fill="#a85a71" stroke="#fff" stroke-width="0.8"/><rect x="2185.82" y="1202.03" width="9" height="29.08" fill="#7f4f72" stroke="#fff" stroke-width="0.8"/><rect x="2197.51" y="1305.63" width="9" height="3.17" fill="#eb8126" stroke="#fff" stroke-width="0.8"/><rect x="2197.51" y="1270.24" width="9" height="35.39" fill="#e8b962" stroke="#fff" stroke-width="0.8"/><rect x="2197.51" y="1256.49" width="9" height="13.75" fill="#eb9d7b" stroke="#fff" stroke-width="0.8"/><rect x="2197.51" y="1250.71" width="9" height="5.78" fill="#e17c7c" stroke="#fff" stroke-width="0.8"/><rect x="2197.51" y="1239.01" width="9" height="11.70" fill="#a85a71" stroke="#fff" stroke-width="0.8"/><rect x="2197.51" y="1182.49" width="9" height="56.52" fill="#7f4f72" stroke="#fff" stroke-width="0.8"/><rect x="2209.21" y="1304.07" width="9" height="4.73" fill="#eb8126" stroke="#fff" stroke-width="0.8"/><rect x="2209.21" y="1266.81" width="9" height="37.26" fill="#e8b962" stroke="#fff" stroke-width="0.8"/><rect x="2209.21" y="1245.62" width="9" height="21.19" fill="#eb9d7b" stroke="#fff" stroke-width="0.8"/><rect x="2209.21" y="1233.22" width="9" height="12.40" fill="#e17c7c" stroke="#fff" stroke-width="0.8"/><rect x="2209.21" y="1216.30" width="9" height="16.91" fill="#a85a71" stroke="#fff" stroke-width="0.8"/><rect x="2209.21" y="1193.18" width="9" height="23.12" fill="#7f4f72" stroke="#fff" stroke-width="0.8"/><rect x="2220.91" y="1296.74" width="9" height="12.06" fill="#eb8126" stroke="#fff" stroke-width="0.8"/><rect x="2220.91" y="1246.89" width="9" height="49.86" fill="#e8b962" stroke="#fff" stroke-width="0.8"/><rect x="2220.91" y="1226.66" width="9" height="20.22" fill="#eb9d7b" stroke="#fff" stroke-width="0.8"/><rect x="2220.91" y="1217.78" width="9" height="8.88" fill="#e17c7c" stroke="#fff" stroke-width="0.8"/><rect x="2220.91" y="1193.00" width="9" height="24.79" fill="#a85a71" stroke="#fff" stroke-width="0.8"/><rect x="2220.91" y="1164.05" width="9" height="28.95" fill="#7f4f72" stroke="#fff" stroke-width="0.8"/><rect x="2232.61" y="1304.88" width="9" height="3.92" fill="#eb8126" stroke="#fff" stroke-width="0.8"/><rect x="2232.61" y="1260.18" width="9" height="44.70" fill="#e8b962" stroke="#fff" stroke-width="0.8"/><rect x="2232.61" y="1235.04" width="9" height="25.13" fill="#eb9d7b" stroke="#fff" stroke-width="0.8"/><rect x="2232.61" y="1229.22" width="9" height="5.83" fill="#e17c7c" stroke="#fff" stroke-width="0.8"/><rect x="2232.61" y="1207.45" width="9" height="21.76" fill="#a85a71" stroke="#fff" stroke-width="0.8"/><rect x="2232.61" y="1182.12" width="9" height="25.34" fill="#7f4f72" stroke="#fff" stroke-width="0.8"/><rect x="2244.31" y="1293.80" width="9" height="15.00" fill="#eb8126" stroke="#fff" stroke-width="0.8"/><rect x="2244.31" y="1250.85" width="9" height="42.95" fill="#e8b962" stroke="#fff" stroke-width="0.8"/><rect x="2244.31" y="1223.05" width="9" height="27.79" fill="#eb9d7b" stroke="#fff" stroke-width="0.8"/><rect x="2244.31" y="1208.54" width="9" height="14.52" fill="#e17c7c" stroke="#fff" stroke-width="0.8"/><rect x="2244.31" y="1200.18" width="9" height="8.36" fill="#a85a71" stroke="#fff" stroke-width="0.8"/><rect x="2244.31" y="1156.30" width="9" height="43.88" fill="#7f4f72" stroke="#fff" stroke-width="0.8"/><rect x="2256.01" y="1299.23" width="9" height="9.57" fill="#eb8126" stroke="#fff" stroke-width="0.8"/><rect x="2256.01" y="1260.36" width="9" height="38.87" fill="#e8b962" stroke="#fff" stroke-width="0.8"/><rect x="2256.01" y="1230.52" width="9" height="29.84" fill="#eb9d7b" stroke="#fff" stroke-width="0.8"/><rect x="2256.01" y="1216.08" width="9" height="14.43" fill="#e17c7c" stroke="#fff" stroke-width="0.8"/><rect x="2256.01" y="1193.79" width="9" height="22.29" fill="#a85a71" stroke="#fff" stroke-width="0.8"/><rect x="2256.01" y="1131.78" width="9" height="62.01" fill="#7f4f72" stroke="#fff" stroke-width="0.8"/><rect x="2267.71" y="1300.62" width="9" height="8.18" fill="#eb8126" stroke="#fff" stroke-width="0.8"/><rect x="2267.71" y="1260.12" width="9" height="40.50" fill="#e8b962" stroke="#fff" stroke-width="0.8"/><rect x="2267.71" y="1239.18" width="9" height="20.94" fill="#eb9d7b" stroke="#fff" stroke-width="0.8"/><rect x="2267.71" y="1228.86" width="9" height="10.33" fill="#e17c7c" stroke="#fff" stroke-width="0.8"/><rect x="2267.71" y="1220.88" width="9" height="7.98" fill="#a85a71" stroke="#fff" stroke-width="0.8"/><rect x="2267.71" y="1198.90" width="9" height="21.98" fill="#7f4f72" stroke="#fff" stroke-width="0.8"/><rect x="2279.41" y="1306.50" width="9" height="2.30" fill="#eb8126" stroke="#fff" stroke-width="0.8"/><rect x="2279.41" y="1279.95" width="9" height="26.55" fill="#e8b962" stroke="#fff" stroke-width="0.8"/><rect x="2279.41" y="1259.73" width="9" height="20.22" fill="#eb9d7b" stroke="#fff" stroke-width="0.8"/><rect x="2279.41" y="1253.03" width="9" height="6.69" fill="#e17c7c" stroke="#fff" stroke-width="0.8"/><rect x="2279.41" y="1230.55" width="9" height="22.49" fill="#a85a71" stroke="#fff" stroke-width="0.8"/><rect x="2279.41" y="1193.55" width="9" height="37.00" fill="#7f4f72" stroke="#fff" stroke-width="0.8"/><rect x="2291.11" y="1298.72" width="9" height="10.08" fill="#eb8126" stroke="#fff" stroke-width="0.8"/><rect x="2291.11" y="1255.75" width="9" height="42.96" fill="#e8b962" stroke="#fff" stroke-width="0.8"/><rect x="2291.11" y="1230.14" width="9" height="25.61" fill="#eb9d7b" stroke="#fff" stroke-width="0.8"/><rect x="2291.11" y="1217.08" width="9" height="13.06" fill="#e17c7c" stroke="#fff" stroke-width="0.8"/><rect x="2291.11" y="1201.62" width="9" height="15.46" fill="#a85a71" stroke="#fff" stroke-width="0.8"/><rect x="2291.11" y="1170.13" width="9" height="31.49" fill="#7f4f72" stroke="#fff" stroke-width="0.8"/><rect x="2302.81" y="1306.91" width="9" height="1.89" fill="#eb8126" stroke="#fff" stroke-width="0.8"/><rect x="2302.81" y="1258.30" width="9" height="48.61" fill="#e8b962" stroke="#fff" stroke-width="0.8"/><rect x="2302.81" y="1230.22" width="9" height="28.09" fill="#eb9d7b" stroke="#fff" stroke-width="0.8"/><rect x="2302.81" y="1219.12" width="9" height="11.10" fill="#e17c7c" stroke="#fff" stroke-width="0.8"/><rect x="2302.81" y="1202.73" width="9" height="16.39" fill="#a85a71" stroke="#fff" stroke-width="0.8"/><rect x="2302.81" y="1162.02" width="9" height="40.71" fill="#7f4f72" stroke="#fff" stroke-width="0.8"/><rect x="2314.50" y="1297.23" width="9" height="11.57" fill="#eb8126" stroke="#fff" stroke-width="0.8"/><rect x="2314.50" y="1272.91" width="9" height="24.32" fill="#e8b962" stroke="#fff" stroke-width="0.8"/><rect x="2314.50" y="1245.06" width="9" height="27.85" fill="#eb9d7b" stroke="#fff" stroke-width="0.8"/><rect x="2314.50" y="1236.73" width="9" height="8.32" fill="#e17c7c" stroke="#fff" stroke-width="0.8"/><rect x="2314.50" y="1229.69" width="9" height="7.04" fill="#a85a71" stroke="#fff" stroke-width="0.8"/><rect x="2314.50" y="1144.68" width="9" height="85.01" fill="#7f4f72" stroke="#fff" stroke-width="0.8"/><rect x="2326.20" y="1303.05" width="9" height="5.75" fill="#eb8126" stroke="#fff" stroke-width="0.8"/><rect x="2326.20" y="1256.81" width="9" height="46.24" fill="#e8b962" stroke="#fff" stroke-width="0.8"/><rect x="2326.20" y="1239.78" width="9" height="17.04" fill="#eb9d7b" stroke="#fff" stroke-width="0.8"/><rect x="2326.20" y="1226.09" width="9" height="13.69" fill="#e17c7c" stroke="#fff" stroke-width="0.8"/><rect x="2326.20" y="1200.82" width="9" height="25.27" fill="#a85a71" stroke="#fff" stroke-width="0.8"/><rect x="2326.20" y="1173.82" width="9" height="27.00" fill="#7f4f72" stroke="#fff" stroke-width="0.8"/><rect x="2337.90" y="1299.67" width="9" height="9.13" fill="#eb8126" stroke="#fff" stroke-width="0.8"/><rect x="2337.90" y="1264.84" width="9" height="34.83" fill="#e8b962" stroke="#fff" stroke-width="0.8"/><rect x="2337.90" y="1242.22" width="9" height="22.62" fill="#eb9d7b" stroke="#fff" stroke-width="0.8"/><rect x="2337.90" y="1229.12" width="9" height="13.10" fill="#e17c7c" stroke="#fff" stroke-width="0.8"/><rect x="2337.90" y="1208.03" width="9" height="21.09" fill="#a85a71" stroke="#fff" stroke-width="0.8"/><rect x="2337.90" y="1162.02" width="9" height="46.02" fill="#7f4f72" stroke="#fff" stroke-width="0.8"/><rect x="2349.60" y="1298.26" width="9" height="10.54" fill="#eb8126" stroke="#fff" stroke-width="0.8"/><rect x="2349.60" y="1256.42" width="9" height="41.84" fill="#e8b962" stroke="#fff" stroke-width="0.8"/><rect x="2349.60" y="1242.48" width="9" height="13.94" fill="#eb9d7b" stroke="#fff" stroke-width="0.8"/><rect x="2349.60" y="1235.59" width="9" height="6.90" fill="#e17c7c" stroke="#fff" stroke-width="0.8"/><rect x="2349.60" y="1225.30" width="9" height="10.28" fill="#a85a71" stroke="#fff" stroke-width="0.8"/><rect x="2349.60" y="1204.43" width="9" height="20.87" fill="#7f4f72" stroke="#fff" stroke-width="0.8"/><rect x="2361.30" y="1295.99" width="9" height="12.81" fill="#eb8126" stroke="#fff" stroke-width="0.8"/><rect x="2361.30" y="1263.76" width="9" height="32.23" fill="#e8b962" stroke="#fff" stroke-width="0.8"/><rect x="2361.30" y="1239.34" width="9" height="24.42" fill="#eb9d7b" stroke="#fff" stroke-width="0.8"/><rect x="2361.30" y="1233.67" width="9" height="5.67" fill="#e17c7c" stroke="#fff" stroke-width="0.8"/><rect x="2361.30" y="1226.90" width="9" height="6.76" fill="#a85a71" stroke="#fff" stroke-width="0.8"/><rect x="2361.30" y="1188.94" width="9" height="37.96" fill="#7f4f72" stroke="#fff" stroke-width="0.8"/><rect x="2373.00" y="1302.99" width="9" height="5.81" fill="#eb8126" stroke="#fff" stroke-width="0.8"/><rect x="2373.00" y="1258.56" width="9" height="44.43" fill="#e8b962" stroke="#fff" stroke-width="0.8"/><rect x="2373.00" y="1231.61" width="9" height="26.95" fill="#eb9d7b" stroke="#fff" stroke-width="0.8"/><rect x="2373.00" y="1218.60" width="9" height="13.01" fill="#e17c7c" stroke="#fff" stroke-width="0.8"/><rect x="2373.00" y="1207.17" width="9" height="11.43" fill="#a85a71" stroke="#fff" stroke-width="0.8"/><rect x="2373.00" y="1155.93" width="9" height="51.24" fill="#7f4f72" stroke="#fff" stroke-width="0.8"/><rect x="2384.70" y="1299.34" width="9" height="9.46" fill="#eb8126" stroke="#fff" stroke-width="0.8"/><rect x="2384.70" y="1261.78" width="9" height="37.55" fill="#e8b962" stroke="#fff" stroke-width="0.8"/><rect x="2384.70" y="1239.42" width="9" height="22.37" fill="#eb9d7b" stroke="#fff" stroke-width="0.8"/><rect x="2384.70" y="1232.57" width="9" height="6.84" fill="#e17c7c" stroke="#fff" stroke-width="0.8"/><rect x="2384.70" y="1208.92" width="9" height="23.66" fill="#a85a71" stroke="#fff" stroke-width="0.8"/><rect x="2384.70" y="1168.66" width="9" height="40.26" fill="#7f4f72" stroke="#fff" stroke-width="0.8"/><rect x="2396.40" y="1304.66" width="9" height="4.14" fill="#eb8126" stroke="#fff" stroke-width="0.8"/><rect x="2396.40" y="1257.42" width="9" height="47.24" fill="#e8b962" stroke="#fff" stroke-width="0.8"/><rect x="2396.40" y="1229.82" width="9" height="27.60" fill="#eb9d7b" stroke="#fff" stroke-width="0.8"/><rect x="2396.40" y="1224.87" width="9" height="4.95" fill="#e17c7c" stroke="#fff" stroke-width="0.8"/><rect x="2396.40" y="1212.03" width="9" height="12.84" fill="#a85a71" stroke="#fff" stroke-width="0.8"/><rect x="2396.40" y="1187.83" width="9" height="24.19" fill="#7f4f72" stroke="#fff" stroke-width="0.8"/><rect x="2408.10" y="1295.73" width="9" height="13.07" fill="#eb8126" stroke="#fff" stroke-width="0.8"/><rect x="2408.10" y="1244.83" width="9" height="50.90" fill="#e8b962" stroke="#fff" stroke-width="0.8"/><rect x="2408.10" y="1224.17" width="9" height="20.66" fill="#eb9d7b" stroke="#fff" stroke-width="0.8"/><rect x="2408.10" y="1216.19" width="9" height="7.98" fill="#e17c7c" stroke="#fff" stroke-width="0.8"/><rect x="2408.10" y="1207.01" width="9" height="9.18" fill="#a85a71" stroke="#fff" stroke-width="0.8"/><rect x="2408.10" y="1181.56" width="9" height="25.45" fill="#7f4f72" stroke="#fff" stroke-width="0.8"/><rect x="2419.80" y="1293.01" width="9" height="15.79" fill="#eb8126" stroke="#fff" stroke-width="0.8"/><rect x="2419.80" y="1263.88" width="9" height="29.12" fill="#e8b962" stroke="#fff" stroke-width="0.8"/><rect x="2419.80" y="1239.18" width="9" height="24.70" fill="#eb9d7b" stroke="#fff" stroke-width="0.8"/><rect x="2419.80" y="1232.08" width="9" height="7.10" fill="#e17c7c" stroke="#fff" stroke-width="0.8"/><rect x="2419.80" y="1215.92" width="9" height="16.16" fill="#a85a71" stroke="#fff" stroke-width="0.8"/><rect x="2419.80" y="1180.09" width="9" height="35.83" fill="#7f4f72" stroke="#fff" stroke-width="0.8"/><rect x="2431.49" y="1292.90" width="9" height="15.90" fill="#eb8126" stroke="#fff" stroke-width="0.8"/><rect x="2431.49" y="1266.37" width="9" height="26.53" fill="#e8b962" stroke="#fff" stroke-width="0.8"/><rect x="2431.49" y="1236.83" width="9" height="29.55" fill="#eb9d7b" stroke="#fff" stroke-width="0.8"/><rect x="2431.49" y="1225.67" width="9" height="11.16" fill="#e17c7c" stroke="#fff" stroke-width="0.8"/><rect x="2431.49" y="1202.14" width="9" height="23.52" fill="#a85a71" stroke="#fff" stroke-width="0.8"/><rect x="2431.49" y="1145.97" width="9" height="56.17" fill="#7f4f72" stroke="#fff" stroke-width="0.8"/><rect x="2443.19" y="1296.58" width="9" height="12.22" fill="#eb8126" stroke="#fff" stroke-width="0.8"/><rect x="2443.19" y="1266.77" width="9" height="29.81" fill="#e8b962" stroke="#fff" stroke-width="0.8"/><rect x="2443.19" y="1235.66" width="9" height="31.12" fill="#eb9d7b" stroke="#fff" stroke-width="0.8"/><rect x="2443.19" y="1224.74" width="9" height="10.91" fill="#e17c7c" stroke="#fff" stroke-width="0.8"/><rect x="2443.19" y="1218.71" width="9" height="6.04" fill="#a85a71" stroke="#fff" stroke-width="0.8"/><rect x="2443.19" y="1164.78" width="9" height="53.93" fill="#7f4f72" stroke="#fff" stroke-width="0.8"/><rect x="2454.89" y="1306.90" width="9" height="1.90" fill="#eb8126" stroke="#fff" stroke-width="0.8"/><rect x="2454.89" y="1268.45" width="9" height="38.45" fill="#e8b962" stroke="#fff" stroke-width="0.8"/><rect x="2454.89" y="1246.40" width="9" height="22.05" fill="#eb9d7b" stroke="#fff" stroke-width="0.8"/><rect x="2454.89" y="1237.53" width="9" height="8.87" fill="#e17c7c" stroke="#fff" stroke-width="0.8"/><rect x="2454.89" y="1229.14" width="9" height="8.39" fill="#a85a71" stroke="#fff" stroke-width="0.8"/><rect x="2454.89" y="1165.34" width="9" height="63.81" fill="#7f4f72" stroke="#fff" stroke-width="0.8"/><rect x="2466.59" y="1302.12" width="9" height="6.68" fill="#eb8126" stroke="#fff" stroke-width="0.8"/><rect x="2466.59" y="1270.63" width="9" height="31.49" fill="#e8b962" stroke="#fff" stroke-width="0.8"/><rect x="2466.59" y="1241.71" width="9" height="28.92" fill="#eb9d7b" stroke="#fff" stroke-width="0.8"/><rect x="2466.59" y="1236.35" width="9" height="5.36" fill="#e17c7c" stroke="#fff" stroke-width="0.8"/><rect x="2466.59" y="1216.30" width="9" height="20.04" fill="#a85a71" stroke="#fff" stroke-width="0.8"/><rect x="2466.59" y="1193.18" width="9" height="23.12" fill="#7f4f72" stroke="#fff" stroke-width="0.8"/><rect x="2478.29" y="1295.09" width="9" height="13.71" fill="#eb8126" stroke="#fff" stroke-width="0.8"/><rect x="2478.29" y="1269.92" width="9" height="25.17" fill="#e8b962" stroke="#fff" stroke-width="0.8"/><rect x="2478.29" y="1239.37" width="9" height="30.55" fill="#eb9d7b" stroke="#fff" stroke-width="0.8"/><rect x="2478.29" y="1226.43" width="9" height="12.94" fill="#e17c7c" stroke="#fff" stroke-width="0.8"/><rect x="2478.29" y="1203.47" width="9" height="22.96" fill="#a85a71" stroke="#fff" stroke-width="0.8"/><rect x="2478.29" y="1177.14" width="9" height="26.33" fill="#7f4f72" stroke="#fff" stroke-width="0.8"/><rect x="2489.99" y="1302.68" width="9" height="6.12" fill="#eb8126" stroke="#fff" stroke-width="0.8"/><rect x="2489.99" y="1268.20" width="9" height="34.48" fill="#e8b962" stroke="#fff" stroke-width="0.8"/><rect x="2489.99" y="1247.32" width="9" height="20.88" fill="#eb9d7b" stroke="#fff" stroke-width="0.8"/><rect x="2489.99" y="1230.74" width="9" height="16.58" fill="#e17c7c" stroke="#fff" stroke-width="0.8"/><rect x="2489.99" y="1213.25" width="9" height="17.48" fill="#a85a71" stroke="#fff" stroke-width="0.8"/><rect x="2489.99" y="1159.99" width="9" height="53.27" fill="#7f4f72" stroke="#fff" stroke-width="0.8"/><rect x="2501.69" y="1301.63" width="9" height="7.17" fill="#eb8126" stroke="#fff" stroke-width="0.8"/><rect x="2501.69" y="1265.30" width="9" height="36.34" fill="#e8b962" stroke="#fff" stroke-width="0.8"/><rect x="2501.69" y="1246.81" width="9" height="18.49" fill="#eb9d7b" stroke="#fff" stroke-width="0.8"/><rect x="2501.69" y="1240.74" width="9" height="6.07" fill="#e17c7c" stroke="#fff" stroke-width="0.8"/><rect x="2501.69" y="1233.15" width="9" height="7.60" fill="#a85a71" stroke="#fff" stroke-width="0.8"/><rect x="2501.69" y="1168.10" width="9" height="65.05" fill="#7f4f72" stroke="#fff" stroke-width="0.8"/><rect x="2513.39" y="1294.64" width="9" height="14.16" fill="#eb8126" stroke="#fff" stroke-width="0.8"/><rect x="2513.39" y="1263.03" width="9" height="31.61" fill="#e8b962" stroke="#fff" stroke-width="0.8"/><rect x="2513.39" y="1231.15" width="9" height="31.89" fill="#eb9d7b" stroke="#fff" stroke-width="0.8"/><rect x="2513.39" y="1222.86" width="9" height="8.29" fill="#e17c7c" stroke="#fff" stroke-width="0.8"/><rect x="2513.39" y="1211.94" width="9" height="10.92" fill="#a85a71" stroke="#fff" stroke-width="0.8"/><rect x="2513.39" y="1163.68" width="9" height="48.26" fill="#7f4f72" stroke="#fff" stroke-width="0.8"/><rect x="2525.09" y="1299.42" width="9" height="9.38" fill="#eb8126" stroke="#fff" stroke-width="0.8"/><rect x="2525.09" y="1270.99" width="9" height="28.43" fill="#e8b962" stroke="#fff" stroke-width="0.8"/><rect x="2525.09" y="1250.51" width="9" height="20.48" fill="#eb9d7b" stroke="#fff" stroke-width="0.8"/><rect x="2525.09" y="1234.40" width="9" height="16.11" fill="#e17c7c" stroke="#fff" stroke-width="0.8"/><rect x="2525.09" y="1210.93" width="9" height="23.47" fill="#a85a71" stroke="#fff" stroke-width="0.8"/><rect x="2525.09" y="1157.04" width="9" height="53.89" fill="#7f4f72" stroke="#fff" stroke-width="0.8"/><rect x="2536.78" y="1301.00" width="9" height="7.80" fill="#eb8126" stroke="#fff" stroke-width="0.8"/><rect x="2536.78" y="1263.71" width="9" height="37.29" fill="#e8b962" stroke="#fff" stroke-width="0.8"/><rect x="2536.78" y="1234.89" width="9" height="28.82" fill="#eb9d7b" stroke="#fff" stroke-width="0.8"/><rect x="2536.78" y="1172.17" width="9" height="62.72" fill="#e17c7c" stroke="#fff" stroke-width="0.8"/><rect x="2536.78" y="1157.59" width="9" height="14.58" fill="#a85a71" stroke="#fff" stroke-width="0.8"/><rect x="2536.78" y="1119.79" width="9" height="37.80" fill="#7f4f72" stroke="#fff" stroke-width="0.8"/><rect x="2548.48" y="1302.39" width="9" height="6.41" fill="#eb8126" stroke="#fff" stroke-width="0.8"/><rect x="2548.48" y="1278.73" width="9" height="23.67" fill="#e8b962" stroke="#fff" stroke-width="0.8"/><rect x="2548.48" y="1254.70" width="9" height="24.02" fill="#eb9d7b" stroke="#fff" stroke-width="0.8"/><rect x="2548.48" y="1254.70" width="9" height="0.00" fill="#e17c7c" stroke="#fff" stroke-width="0.8"/><rect x="2548.48" y="1131.92" width="9" height="122.78" fill="#a85a71" stroke="#fff" stroke-width="0.8"/><rect x="2548.48" y="1087.70" width="9" height="44.22" fill="#7f4f72" stroke="#fff" stroke-width="0.8"/><rect x="2560.18" y="1288.52" width="9" height="20.28" fill="#eb8126" stroke="#fff" stroke-width="0.8"/><rect x="2560.18" y="1246.10" width="9" height="42.41" fill="#e8b962" stroke="#fff" stroke-width="0.8"/><rect x="2560.18" y="1227.66" width="9" height="18.44" fill="#eb9d7b" stroke="#fff" stroke-width="0.8"/><rect x="2560.18" y="1185.25" width="9" height="42.41" fill="#e17c7c" stroke="#fff" stroke-width="0.8"/><rect x="2560.18" y="1177.88" width="9" height="7.38" fill="#a85a71" stroke="#fff" stroke-width="0.8"/><rect x="2560.18" y="1143.21" width="9" height="34.67" fill="#7f4f72" stroke="#fff" stroke-width="0.8"/><rect x="2571.88" y="1290.36" width="9" height="18.44" fill="#eb8126" stroke="#fff" stroke-width="0.8"/><rect x="2571.88" y="1259.01" width="9" height="31.35" fill="#e8b962" stroke="#fff" stroke-width="0.8"/><rect x="2571.88" y="1227.66" width="9" height="31.35" fill="#eb9d7b" stroke="#fff" stroke-width="0.8"/><rect x="2571.88" y="1215.86" width="9" height="11.80" fill="#e17c7c" stroke="#fff" stroke-width="0.8"/><rect x="2571.88" y="1201.11" width="9" height="14.75" fill="#a85a71" stroke="#fff" stroke-width="0.8"/><rect x="2571.88" y="1158.33" width="9" height="42.78" fill="#7f4f72" stroke="#fff" stroke-width="0.8"/><rect x="2583.58" y="1303.46" width="9" height="5.34" fill="#eb8126" stroke="#fff" stroke-width="0.8"/><rect x="2583.58" y="1241.14" width="9" height="62.32" fill="#e8b962" stroke="#fff" stroke-width="0.8"/><rect x="2583.58" y="1214.43" width="9" height="26.71" fill="#eb9d7b" stroke="#fff" stroke-width="0.8"/><rect x="2583.58" y="1169.03" width="9" height="45.40" fill="#e17c7c" stroke="#fff" stroke-width="0.8"/><rect x="2583.58" y="1154.79" width="9" height="14.24" fill="#a85a71" stroke="#fff" stroke-width="0.8"/><rect x="2583.58" y="1116.29" width="9" height="38.50" fill="#7f4f72" stroke="#fff" stroke-width="0.8"/><rect x="2595.28" y="1297.00" width="9" height="11.80" fill="#eb8126" stroke="#fff" stroke-width="0.8"/><rect x="2595.28" y="1263.81" width="9" height="33.19" fill="#e8b962" stroke="#fff" stroke-width="0.8"/><rect x="2595.28" y="1244.26" width="9" height="19.55" fill="#eb9d7b" stroke="#fff" stroke-width="0.8"/><rect x="2595.28" y="1187.10" width="9" height="57.16" fill="#e17c7c" stroke="#fff" stroke-width="0.8"/><rect x="2595.28" y="1170.50" width="9" height="16.60" fill="#a85a71" stroke="#fff" stroke-width="0.8"/><rect x="2595.28" y="1120.71" width="9" height="49.79" fill="#7f4f72" stroke="#fff" stroke-width="0.8"/><rect x="2606.98" y="1304.84" width="9" height="3.96" fill="#eb8126" stroke="#fff" stroke-width="0.8"/><rect x="2606.98" y="1264.25" width="9" height="40.59" fill="#e8b962" stroke="#fff" stroke-width="0.8"/><rect x="2606.98" y="1238.50" width="9" height="25.75" fill="#eb9d7b" stroke="#fff" stroke-width="0.8"/><rect x="2606.98" y="1230.33" width="9" height="8.17" fill="#e17c7c" stroke="#fff" stroke-width="0.8"/><rect x="2606.98" y="1223.83" width="9" height="6.50" fill="#a85a71" stroke="#fff" stroke-width="0.8"/><rect x="2606.98" y="1202.59" width="9" height="21.24" fill="#7f4f72" stroke="#fff" stroke-width="0.8"/><rect x="2618.68" y="1304.12" width="9" height="4.68" fill="#eb8126" stroke="#fff" stroke-width="0.8"/><rect x="2618.68" y="1278.98" width="9" height="25.14" fill="#e8b962" stroke="#fff" stroke-width="0.8"/><rect x="2618.68" y="1259.13" width="9" height="19.84" fill="#eb9d7b" stroke="#fff" stroke-width="0.8"/><rect x="2618.68" y="1252.59" width="9" height="6.54" fill="#e17c7c" stroke="#fff" stroke-width="0.8"/><rect x="2618.68" y="1242.21" width="9" height="10.38" fill="#a85a71" stroke="#fff" stroke-width="0.8"/><rect x="2618.68" y="1191.52" width="9" height="50.69" fill="#7f4f72" stroke="#fff" stroke-width="0.8"/><rect x="2630.38" y="1303.14" width="9" height="5.66" fill="#eb8126" stroke="#fff" stroke-width="0.8"/><rect x="2630.38" y="1262.11" width="9" height="41.03" fill="#e8b962" stroke="#fff" stroke-width="0.8"/><rect x="2630.38" y="1231.20" width="9" height="30.91" fill="#eb9d7b" stroke="#fff" stroke-width="0.8"/><rect x="2630.38" y="1217.38" width="9" height="13.83" fill="#e17c7c" stroke="#fff" stroke-width="0.8"/><rect x="2630.38" y="1203.47" width="9" height="13.90" fill="#a85a71" stroke="#fff" stroke-width="0.8"/><rect x="2630.38" y="1175.11" width="9" height="28.36" fill="#7f4f72" stroke="#fff" stroke-width="0.8"/><rect x="2642.08" y="1300.85" width="9" height="7.95" fill="#eb8126" stroke="#fff" stroke-width="0.8"/><rect x="2642.08" y="1261.32" width="9" height="39.53" fill="#e8b962" stroke="#fff" stroke-width="0.8"/><rect x="2642.08" y="1240.77" width="9" height="20.55" fill="#eb9d7b" stroke="#fff" stroke-width="0.8"/><rect x="2642.08" y="1231.50" width="9" height="9.27" fill="#e17c7c" stroke="#fff" stroke-width="0.8"/><rect x="2642.08" y="1224.71" width="9" height="6.79" fill="#a85a71" stroke="#fff" stroke-width="0.8"/><rect x="2642.08" y="1179.72" width="9" height="44.99" fill="#7f4f72" stroke="#fff" stroke-width="0.8"/><rect x="2653.78" y="1302.86" width="9" height="5.94" fill="#eb8126" stroke="#fff" stroke-width="0.8"/><rect x="2653.78" y="1248.61" width="9" height="54.25" fill="#e8b962" stroke="#fff" stroke-width="0.8"/><rect x="2653.78" y="1233.15" width="9" height="15.46" fill="#eb9d7b" stroke="#fff" stroke-width="0.8"/><rect x="2653.78" y="1222.05" width="9" height="11.10" fill="#e17c7c" stroke="#fff" stroke-width="0.8"/><rect x="2653.78" y="1203.75" width="9" height="18.30" fill="#a85a71" stroke="#fff" stroke-width="0.8"/><rect x="2653.78" y="1157.04" width="9" height="46.71" fill="#7f4f72" stroke="#fff" stroke-width="0.8"/><rect x="2665.47" y="1294.23" width="9" height="14.57" fill="#eb8126" stroke="#fff" stroke-width="0.8"/><rect x="2665.47" y="1264.93" width="9" height="29.30" fill="#e8b962" stroke="#fff" stroke-width="0.8"/><rect x="2665.47" y="1246.53" width="9" height="18.41" fill="#eb9d7b" stroke="#fff" stroke-width="0.8"/><rect x="2665.47" y="1238.24" width="9" height="8.28" fill="#e17c7c" stroke="#fff" stroke-width="0.8"/><rect x="2665.47" y="1224.60" width="9" height="13.64" fill="#a85a71" stroke="#fff" stroke-width="0.8"/><rect x="2665.47" y="1163.12" width="9" height="61.48" fill="#7f4f72" stroke="#fff" stroke-width="0.8"/><rect x="2677.17" y="1301.64" width="9" height="7.16" fill="#eb8126" stroke="#fff" stroke-width="0.8"/><rect x="2677.17" y="1255.92" width="9" height="45.72" fill="#e8b962" stroke="#fff" stroke-width="0.8"/><rect x="2677.17" y="1230.31" width="9" height="25.61" fill="#eb9d7b" stroke="#fff" stroke-width="0.8"/><rect x="2677.17" y="1217.40" width="9" height="12.91" fill="#e17c7c" stroke="#fff" stroke-width="0.8"/><rect x="2677.17" y="1212.32" width="9" height="5.08" fill="#a85a71" stroke="#fff" stroke-width="0.8"/><rect x="2677.17" y="1188.20" width="9" height="24.12" fill="#7f4f72" stroke="#fff" stroke-width="0.8"/><rect x="2688.87" y="1306.80" width="9" height="2.00" fill="#eb8126" stroke="#fff" stroke-width="0.8"/><rect x="2688.87" y="1267.42" width="9" height="39.38" fill="#e8b962" stroke="#fff" stroke-width="0.8"/><rect x="2688.87" y="1240.63" width="9" height="26.79" fill="#eb9d7b" stroke="#fff" stroke-width="0.8"/><rect x="2688.87" y="1231.34" width="9" height="9.28" fill="#e17c7c" stroke="#fff" stroke-width="0.8"/><rect x="2688.87" y="1216.30" width="9" height="15.04" fill="#a85a71" stroke="#fff" stroke-width="0.8"/><rect x="2688.87" y="1193.18" width="9" height="23.12" fill="#7f4f72" stroke="#fff" stroke-width="0.8"/><rect x="2700.57" y="1306.95" width="9" height="1.85" fill="#eb8126" stroke="#fff" stroke-width="0.8"/><rect x="2700.57" y="1271.83" width="9" height="35.12" fill="#e8b962" stroke="#fff" stroke-width="0.8"/><rect x="2700.57" y="1240.12" width="9" height="31.71" fill="#eb9d7b" stroke="#fff" stroke-width="0.8"/><rect x="2700.57" y="1225.46" width="9" height="14.67" fill="#e17c7c" stroke="#fff" stroke-width="0.8"/><rect x="2700.57" y="1202.57" width="9" height="22.88" fill="#a85a71" stroke="#fff" stroke-width="0.8"/><rect x="2700.57" y="1119.42" width="9" height="83.15" fill="#7f4f72" stroke="#fff" stroke-width="0.8"/><rect x="2712.27" y="1292.61" width="9" height="16.19" fill="#eb8126" stroke="#fff" stroke-width="0.8"/><rect x="2712.27" y="1262.24" width="9" height="30.38" fill="#e8b962" stroke="#fff" stroke-width="0.8"/><rect x="2712.27" y="1247.12" width="9" height="15.12" fill="#eb9d7b" stroke="#fff" stroke-width="0.8"/><rect x="2712.27" y="1239.88" width="9" height="7.24" fill="#e17c7c" stroke="#fff" stroke-width="0.8"/><rect x="2712.27" y="1223.75" width="9" height="16.13" fill="#a85a71" stroke="#fff" stroke-width="0.8"/><rect x="2712.27" y="1155.93" width="9" height="67.82" fill="#7f4f72" stroke="#fff" stroke-width="0.8"/><rect x="2723.97" y="1297.73" width="9" height="11.07" fill="#eb8126" stroke="#fff" stroke-width="0.8"/><rect x="2723.97" y="1248.08" width="9" height="49.65" fill="#e8b962" stroke="#fff" stroke-width="0.8"/><rect x="2723.97" y="1222.46" width="9" height="25.62" fill="#eb9d7b" stroke="#fff" stroke-width="0.8"/><rect x="2723.97" y="1210.65" width="9" height="11.81" fill="#e17c7c" stroke="#fff" stroke-width="0.8"/><rect x="2723.97" y="1191.08" width="9" height="19.57" fill="#a85a71" stroke="#fff" stroke-width="0.8"/><rect x="2723.97" y="1161.65" width="9" height="29.43" fill="#7f4f72" stroke="#fff" stroke-width="0.8"/><rect x="2735.67" y="1300.21" width="9" height="8.59" fill="#eb8126" stroke="#fff" stroke-width="0.8"/><rect x="2735.67" y="1259.78" width="9" height="40.43" fill="#e8b962" stroke="#fff" stroke-width="0.8"/><rect x="2735.67" y="1246.07" width="9" height="13.71" fill="#eb9d7b" stroke="#fff" stroke-width="0.8"/><rect x="2735.67" y="1231.88" width="9" height="14.19" fill="#e17c7c" stroke="#fff" stroke-width="0.8"/><rect x="2735.67" y="1221.63" width="9" height="10.25" fill="#a85a71" stroke="#fff" stroke-width="0.8"/><rect x="2735.67" y="1180.83" width="9" height="40.80" fill="#7f4f72" stroke="#fff" stroke-width="0.8"/></svg>
<div class="a" style="left:1189px;top:1308px;width:1569px;height:3px;background:#a8a8a8"></div>
<div class="t " style="left:1040.5px;top:1446.5px;font-size:39.6px;color:#11171c;font-weight:700;">encounter_class:</div>
<div class="a" style="left:1422px;top:1449px;width:36px;height:36px;background:#7f4f72"></div>
<div class="t " style="left:1473.0px;top:1449.7px;font-size:35.8px;color:#11171c;">ambulatory</div>
<div class="a" style="left:1711px;top:1449px;width:36px;height:36px;background:#a85a71"></div>
<div class="t " style="left:1762.5px;top:1449.7px;font-size:35.8px;color:#11171c;">emergency</div>
<div class="a" style="left:2000px;top:1449px;width:36px;height:36px;background:#e17c7c"></div>
<div class="t " style="left:2051.0px;top:1449.7px;font-size:35.8px;color:#11171c;">inpatient</div>
<div class="a" style="left:2247px;top:1449px;width:36px;height:36px;background:#eb9d7b"></div>
<div class="t " style="left:2298.0px;top:1449.7px;font-size:35.8px;color:#11171c;">outpatient</div>
<div class="a" style="left:2516px;top:1449px;width:36px;height:36px;background:#e8b962"></div>
<div class="t " style="left:2567.0px;top:1449.7px;font-size:35.8px;color:#11171c;">urgentcare</div>
<div class="a" style="left:1041px;top:1503px;width:36px;height:36px;background:#eb8126"></div>
<div class="t " style="left:1093.0px;top:1503.3px;font-size:35.8px;color:#11171c;">wellness</div>
<div class="a" style="left:999px;top:1605px;width:1858px;height:595px;background:#fff;border-radius:16px"></div>
<div class="t " style="left:1042.0px;top:1642.6px;font-size:39.4px;color:#11171c;font-weight:700;">Average coverage by encounter class over time</div>
<div class="a" style="left:1356px;top:1754px;width:3px;height:384px;background:#e8e8e8"></div>
<div class="a" style="left:1644px;top:1754px;width:3px;height:384px;background:#e8e8e8"></div>
<div class="a" style="left:1932px;top:1754px;width:3px;height:384px;background:#e8e8e8"></div>
<div class="a" style="left:2220px;top:1754px;width:3px;height:384px;background:#e8e8e8"></div>
<div class="a" style="left:2508px;top:1754px;width:3px;height:384px;background:#e8e8e8"></div>
<div class="a" style="left:2796px;top:1754px;width:3px;height:384px;background:#e8e8e8"></div>
<div class="a" style="left:1213px;top:1842px;width:1584px;height:3px;background:#e8e8e8"></div>
<div class="a" style="left:1181px;top:1842px;width:15px;height:3px;background:#d0d0d0"></div>
<div class="t" style="right:2652.5px;top:1824.2px;font-size:37px;color:#11171c;">5000</div>
<div class="t" style="left:759.5px;top:1957.5px;width:600px;height:40px;text-align:center;font-size:38.9px;font-weight:700;color:#11171c;transform:rotate(-90deg);line-height:40px">Average payer_coverage</div>
<svg class="a" style="left:0;top:0" width="3828" height="2138"><circle cx="1212" cy="1806" r="7" fill="rgba(225,124,124,.7)"/><circle cx="1212" cy="2047" r="15" fill="rgba(127,79,114,.7)"/><circle cx="1212" cy="2093" r="11" fill="rgba(235,157,123,.7)"/><circle cx="1356" cy="1842.5" r="7" fill="rgba(225,124,124,.7)"/><circle cx="1356" cy="2076" r="13" fill="rgba(235,157,123,.7)"/><circle cx="1356" cy="2093" r="12" fill="rgba(232,185,98,.7)"/><circle cx="1500" cy="1897" r="8" fill="rgba(225,124,124,.7)"/><circle cx="1500" cy="2079" r="13" fill="rgba(235,157,123,.7)"/><circle cx="1644" cy="2067" r="30" fill="rgba(127,79,114,.7)"/><circle cx="1644" cy="2070" r="12.5" fill="rgba(232,185,98,.7)"/><circle cx="1644" cy="2146" r="13" fill="rgba(235,157,123,.7)"/><circle cx="1788" cy="2104" r="13" fill="rgba(235,157,123,.7)"/><circle cx="1788" cy="2135" r="14" fill="rgba(232,185,98,.7)"/><circle cx="1932" cy="1938" r="9" fill="rgba(235,129,38,.7)"/><circle cx="1932" cy="1940" r="8" fill="rgba(225,124,124,.7)"/><circle cx="1932" cy="2030" r="11" fill="rgba(168,90,113,.7)"/><circle cx="1932" cy="2082" r="18" fill="rgba(127,79,114,.7)"/><circle cx="2076" cy="1937" r="9" fill="rgba(235,129,38,.7)"/><circle cx="2076" cy="1987" r="18" fill="rgba(127,79,114,.7)"/><circle cx="2076" cy="1990" r="8" fill="rgba(225,124,124,.7)"/><circle cx="2076" cy="1997" r="8" fill="rgba(168,90,113,.7)"/><circle cx="2076" cy="2133" r="13" fill="rgba(235,157,123,.7)"/><circle cx="2076" cy="2140" r="12" fill="rgba(235,157,123,.7)"/><circle cx="2220" cy="1943" r="9" fill="rgba(235,129,38,.7)"/><circle cx="2220" cy="2064" r="17" fill="rgba(127,79,114,.7)"/><circle cx="2220" cy="2052" r="11" fill="rgba(168,90,113,.7)"/><circle cx="2220" cy="2119" r="13" fill="rgba(235,157,123,.7)"/><circle cx="2220" cy="2119" r="7" fill="rgba(225,124,124,.7)"/><circle cx="2220" cy="2133" r="13" fill="rgba(232,185,98,.7)"/><circle cx="2363" cy="1937" r="9" fill="rgba(235,129,38,.7)"/><circle cx="2363" cy="1947" r="11" fill="rgba(168,90,113,.7)"/><circle cx="2363" cy="2016" r="16" fill="rgba(127,79,114,.7)"/><circle cx="2363" cy="2061" r="12" fill="rgba(235,157,123,.7)"/><circle cx="2363" cy="2061" r="8" fill="rgba(225,124,124,.7)"/><circle cx="2363" cy="2086" r="13" fill="rgba(232,185,98,.7)"/><circle cx="2508" cy="1752" r="7" fill="rgba(225,124,124,.7)"/><circle cx="2508" cy="1931" r="9" fill="rgba(235,129,38,.7)"/><circle cx="2508" cy="2021" r="13" fill="rgba(232,185,98,.7)"/><circle cx="2508" cy="2044" r="12" fill="rgba(168,90,113,.7)"/><circle cx="2508" cy="2049" r="12" fill="rgba(235,157,123,.7)"/><circle cx="2508" cy="2119" r="20" fill="rgba(127,79,114,.7)"/><circle cx="2652" cy="1848" r="6" fill="rgba(225,124,124,.7)"/><circle cx="2652" cy="1931" r="9" fill="rgba(235,129,38,.7)"/><circle cx="2652" cy="2013" r="13" fill="rgba(232,185,98,.7)"/><circle cx="2652" cy="2077" r="21" fill="rgba(127,79,114,.7)"/><circle cx="2652" cy="2070" r="10" fill="rgba(168,90,113,.7)"/><circle cx="2796" cy="1899" r="5" fill="rgba(127,79,114,.7)"/><circle cx="2796" cy="1904" r="5" fill="rgba(235,129,38,.7)"/><circle cx="2796" cy="2001" r="5" fill="rgba(232,185,98,.7)"/><circle cx="2796" cy="2073" r="5" fill="rgba(235,157,123,.7)"/><circle cx="2796" cy="2085" r="8" fill="rgba(127,79,114,.7)"/><circle cx="2796" cy="2133" r="4" fill="rgba(225,124,124,.7)"/></svg>
<div class="a" style="left:1076px;top:1899px;width:770px;height:144px;background:#2472b3;border-radius:11px;box-shadow:0 6px 40px rgba(0,0,0,.16)"></div>
<svg class="a" style="left:1123px;top:1947px;" width="50" height="50" viewBox="0 0 50 50"><path d="M6 6 L44.5 21.5 L27 26.5 L21.5 43.5 Z" fill="none" stroke="#fff" stroke-width="4.4" stroke-linejoin="round"/></svg>
<svg class="a" style="left:1242px;top:1947px;" width="50" height="50" viewBox="0 0 50 50"><path d="M6.6 3 V42.6 H46.9 M13.4 30 L22.4 21 L30 28.6 L45 13.5" fill="none" stroke="#fff" stroke-width="4.6"/></svg>
<svg class="a" style="left:1362px;top:1947px;" width="50" height="50" viewBox="0 0 50 50"><rect x="6.9" y="4.9" width="38" height="38" rx="1.5" fill="none" stroke="#fff" stroke-width="3.9"/><path d="M14.7 15.3 H35.9 M25.3 13 V34" stroke="#fff" stroke-width="5"/></svg>
<svg class="a" style="left:1482px;top:1947px;" width="50" height="50" viewBox="0 0 50 50"><path d="M4 5 H46 L30 24 V42 H20 V24 Z" fill="none" stroke="#fff" stroke-width="3.8" stroke-linejoin="round"/></svg>
<div class="a" style="left:1580px;top:1947px;width:3px;height:49px;background:rgba(255,255,255,.55)"></div>
<svg class="a" style="left:1628px;top:1947px;" width="52" height="50" viewBox="0 0 52 50"><path d="M15 8 L5 20 L15 31 M5 20 H37 C44 20 48 25 48 30 C48 36 44 40 37 40 H27" fill="none" stroke="rgba(255,255,255,.55)" stroke-width="3.8"/></svg>
<svg class="a" style="left:1748px;top:1947px;" width="52" height="50" viewBox="0 0 52 50"><path d="M37 8 L47 20 L37 31 M47 20 H15 C8 20 4 25 4 30 C4 36 8 40 15 40 H25" fill="none" stroke="rgba(255,255,255,.55)" stroke-width="3.8"/></svg>
<div class="a" style="left:2902px;top:502px;width:12px;height:340px;background:#46525c;border-radius:6px"></div>
<div class="t " style="left:2966.0px;top:493.4px;font-size:39.7px;color:#11171c;font-weight:700;">Settings</div>
<svg class="a" style="left:3700px;top:493px;" width="42" height="40" viewBox="0 0 42 40"><path d="M4 4 L38 36 M38 4 L4 36" stroke="#5f7281" stroke-width="4.2"/></svg>
<div class="a" style="left:2966px;top:653px;width:803px;height:3px;background:#c9d3dc"></div>
<div class="t " style="left:2966.0px;top:717.4px;font-size:38.8px;color:#11171c;font-weight:700;">Tags:</div>
<div class="a" style="left:3079px;top:705px;width:281px;height:60px;background:#f1f2fc;border-radius:12px"></div>
<svg class="a" style="left:3104px;top:710px;" width="50" height="48" viewBox="0 0 50 48"><path d="M33 5 C26 3 19 8 20 16 C20 18 21 20 21 21 L6 36 C3 39 5 44 9 42 L24 27 C26 28 28 28 30 28 C37 28 42 21 40 14 L34 19 L28 18 L27 12 Z" fill="none" stroke="#0d1a52" stroke-width="4.2" stroke-linejoin="round"/></svg>
<div class="t " style="left:3171.0px;top:715.8px;font-size:40.4px;color:#0d1a52;font-weight:700;">Certified</div>
<div class="a" style="left:2966px;top:777px;width:415px;height:59px;background:#eff6fa;border-radius:12px"></div>
<svg class="a" style="left:2992px;top:781px;" width="42" height="52" viewBox="0 0 42 52"><rect x="4" y="20" width="34" height="29" fill="none" stroke="#0b3a47" stroke-width="4.4"/><path d="M10 20 V14 C10 7 15 3 21 3 C27 3 32 7 32 14 V20" fill="none" stroke="#0b3a47" stroke-width="4.4"/><path d="M21 30 V39" stroke="#0b3a47" stroke-width="4.4"/></svg>
<div class="t " style="left:3056.5px;top:789.4px;font-size:38.5px;color:#0b3a47;font-weight:700;letter-spacing:-1.5px">LOB</div>
<div class="t " style="left:3140.5px;top:789.0px;font-size:39px;color:#0b3a47;">:</div>
<div class="t " style="left:3157.0px;top:787.3px;font-size:41px;color:#0b3a47;">Operations</div>
<div class="a" style="left:2966px;top:855px;width:455px;height:60px;background:#eff6fa;border-radius:12px"></div>
<svg class="a" style="left:2992px;top:859px;" width="42" height="52" viewBox="0 0 42 52"><rect x="4" y="20" width="34" height="29" fill="none" stroke="#0b3a47" stroke-width="4.4"/><path d="M10 20 V14 C10 7 15 3 21 3 C27 3 32 7 32 14 V20" fill="none" stroke="#0b3a47" stroke-width="4.4"/><path d="M21 30 V39" stroke="#0b3a47" stroke-width="4.4"/></svg>
<div class="t " style="left:3056.0px;top:865.7px;font-size:40.1px;color:#0b3a47;font-weight:700;">Team</div>
<div class="t " style="left:3163.0px;top:866.6px;font-size:39px;color:#0b3a47;">:</div>
<div class="t " style="left:3181.0px;top:865.1px;font-size:40.7px;color:#0b3a47;">Dashboards</div>
<svg class="a" style="left:3458px;top:861px;" width="48" height="48" viewBox="0 0 48 48"><path d="M4 44 L4 35 L32 7 C34 5 37 5 39 7 L41 9 C43 11 43 14 41 16 L13 44 Z M28 11 L37 20" fill="none" stroke="#5f7281" stroke-width="4.2" stroke-linejoin="round"/></svg>
<div class="a" style="left:2863px;top:570px;width:711px;height:95px;background:#11171c;border-radius:12px;box-shadow:0 4px 40px rgba(0,0,0,.12)"></div>
<svg class="a" style="left:3201px;top:664px;" width="36" height="18" viewBox="0 0 36 18"><path d="M0 0 L18 16 L36 0 Z" fill="#11171c"/></svg>
<div class="t " style="left:2888.5px;top:597.5px;font-size:41.9px;color:#fff;">system.certification_status: certified</div>
<div class="a" style="left:2819px;top:530px;width:989px;height:421px;border:13px solid #fd5a4c;box-sizing:border-box;filter:drop-shadow(0 4px 3px rgba(0,0,0,.55))"></div>
<div class="t " style="left:2964.0px;top:957.2px;font-size:39.9px;color:#11171c;font-weight:700;">Locale</div>
<div class="t " style="left:2963.5px;top:1011.1px;font-size:38.3px;color:#5f7281;">Localize numbers and date format</div>
<div class="a" style="left:2965px;top:1078px;width:803px;height:94px;border:3px solid #c0cdd8;border-radius:10px;box-sizing:border-box"></div>
<div class="t " style="left:3004.0px;top:1106.0px;font-size:41.3px;color:#5f7281;">Auto</div>
<svg class="a" style="left:3704px;top:1116px;" width="30" height="22" viewBox="0 0 30 22"><path d="M4 5 L15 16 L26 5" fill="none" stroke="#5f7281" stroke-width="4"/></svg>
<svg class="a" style="left:2964px;top:1231px;" width="52" height="42" viewBox="0 0 52 42"><defs><linearGradient id="gg" x1="0" y1="0" x2="1" y2="1"><stop offset="0" stop-color="#4299e1"/><stop offset="0.5" stop-color="#b84fd6"/><stop offset="1" stop-color="#ff4a3d"/></linearGradient></defs><path d="M24 4 H4 V36 H48 V26" fill="none" stroke="url(#gg)" stroke-width="4.5"/><path d="M37.5 3.5 Q40.5 11.5 48.5 14.5 Q40.5 17.5 37.5 25.5 Q34.5 17.5 26.5 14.5 Q34.5 11.5 37.5 3.5 Z" fill="#cc47cf" stroke="#cc47cf" stroke-width="2" stroke-linejoin="round"/></svg>
<div class="t " style="left:3025.0px;top:1233.9px;font-size:39.1px;color:#11171c;font-weight:700;">Enable Genie</div>
<div class="a" style="left:3661px;top:1227px;width:84px;height:48px;background:#2272b4;border-radius:24px"></div>
<div class="a" style="left:3700px;top:1231px;width:41px;height:40px;background:#fff;border-radius:50%"></div>
<div class="t " style="left:2964.0px;top:1285.5px;font-size:38.35px;color:#5f7281;">Genie is a no-code tool that helps answer</div>
<div class="t " style="left:2964.0px;top:1333.3px;font-size:38.66px;color:#5f7281;">questions about your dashboard.</div>
<div class="a" style="left:2965px;top:1409px;width:48px;height:48px;background:#2272b4;border-radius:50%"></div>
<div class="a" style="left:2983px;top:1427px;width:12px;height:12px;background:#fff;border-radius:50%"></div>
<div class="t " style="left:3037.5px;top:1411.1px;font-size:40.8px;color:#11171c;">Auto-generate Genie space</div>
<div class="a" style="left:3548px;top:1407px;width:106px;height:48px;background:#f3f0fd;border-radius:24px"></div>
<div class="t " style="left:3559.0px;top:1411.7px;font-size:40px;color:#2b2265;">Beta</div>
<div class="t " style="left:3037.6px;top:1465.5px;font-size:38.4px;color:#5f7281;">The published dashboard's context is used</div>
<div class="t " style="left:3037.6px;top:1514.1px;font-size:38.2px;color:#5f7281;">to build this Genie space. You can</div>
<div class="t " style="left:3037.0px;top:1567.5px;font-size:38.35px;color:#2272b4;">open the draft Genie Space here<span style="color:#5f7281;font-size:24px">.</span></div>
<div class="a" style="left:2966px;top:1650px;width:46px;height:46px;border:3px solid #c0cdd8;border-radius:50%;box-sizing:border-box"></div>
<div class="t " style="left:3035.0px;top:1652.0px;font-size:40.9px;color:#11171c;">Link existing Genie space</div>
<div class="a" style="left:0px;top:2138px;width:3828px;height:14px;background:#f6f7f9"></div>
<div class="a" style="left:4px;top:1900px;width:3816px;height:241px;border:3px solid #e3e8ed;border-top:none;border-radius:0 0 22px 22px;box-sizing:border-box"></div></div><script>(function(){var w=window.innerWidth;if(w&&Math.abs(w-3828)>2){var k=w/3828;var r=document.getElementById("root");r.style.transform="scale("+k+")";r.style.transformOrigin="0 0";document.documentElement.style.width=w+"px";document.documentElement.style.height=Math.round(2152*k)+"px";document.body.style.width=w+"px";document.body.style.height=Math.round(2152*k)+"px";}})();</script>
</body></html>
